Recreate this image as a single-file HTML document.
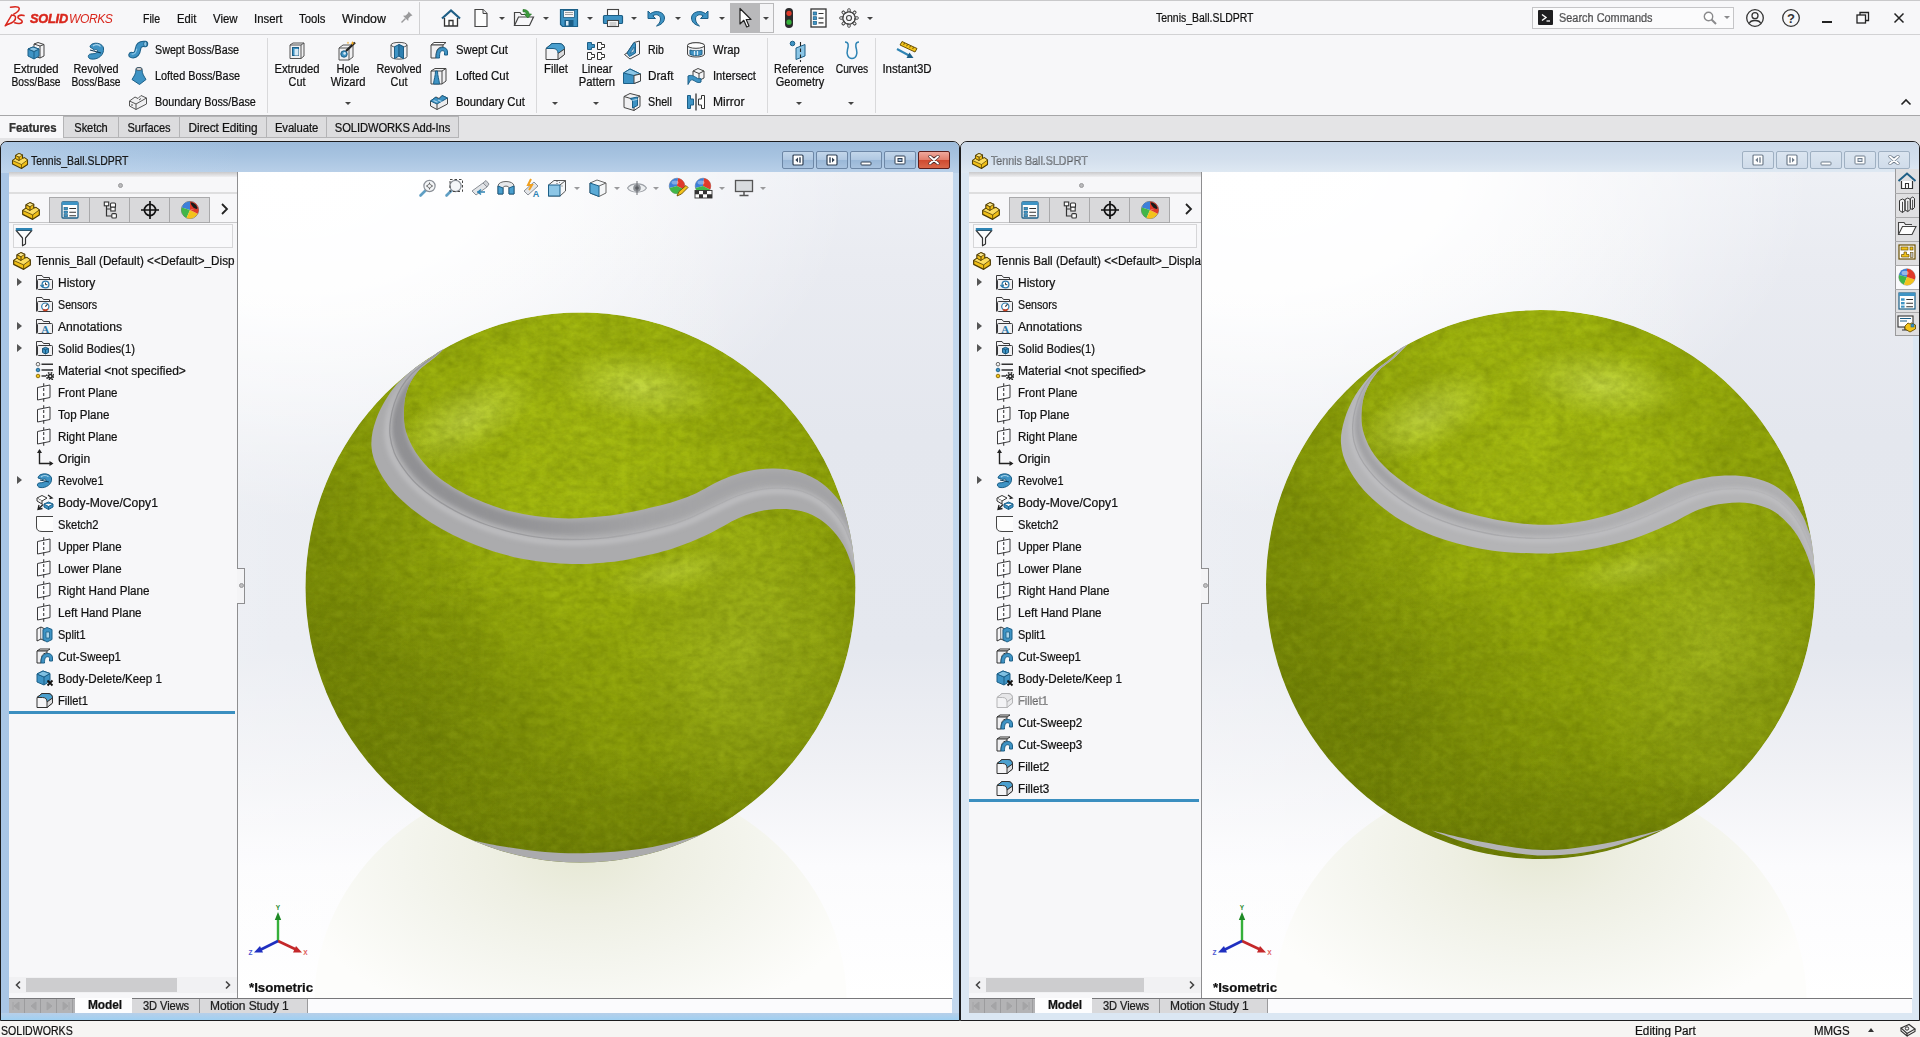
<!DOCTYPE html>
<html><head><meta charset="utf-8"><title>SOLIDWORKS</title><style>
*{box-sizing:border-box;margin:0;padding:0}
html,body{width:1920px;height:1037px;overflow:hidden;background:#e4e4e6;font-family:"Liberation Sans",sans-serif;font-size:12px;color:#111;-webkit-text-stroke:0.22px #111}
.a{position:absolute}
.t{position:absolute;white-space:nowrap;line-height:14px;height:14px;transform:scaleX(.93);transform-origin:0 50%}
.c{text-align:center}
.t.c{transform-origin:50% 50%}
#top{left:0;top:0;width:1920px;height:35px;background:#f7f7f9;border-top:1px solid #c9c9cb;border-bottom:1px solid #d2d2d4}
#ribbon{left:0;top:35px;width:1920px;height:81px;background:#f7f7f9;border-bottom:1px solid #a6a6a8}
#tabs{left:0;top:116px;width:1920px;height:26px;background:#e4e4e6}
.rtab{position:absolute;top:0;height:22px;border:1px solid #b4b4b6;border-left:none;background:#dcdcde;line-height:23px;text-align:center;letter-spacing:-0.1px}
.vsep{position:absolute;width:1px;background:#d9d9db}
#status{left:0;top:1021px;width:1920px;height:16px;background:#f6f5f3}
.win{position:absolute;top:141px;height:880px;border:1px solid #1c1c1e;border-radius:7px 7px 0 0;overflow:hidden}
.tree{position:absolute;background:#f7f7f9;overflow:hidden}
.ti{position:absolute;white-space:nowrap;line-height:14px;height:14px;font-size:12px;transform:scaleX(.935);transform-origin:0 50%}
.arr{position:absolute;width:0;height:0;border-left:5px solid #555;border-top:4px solid transparent;border-bottom:4px solid transparent}
.dd{position:absolute;width:0;height:0;border-top:3px solid #444;border-left:3px solid transparent;border-right:3px solid transparent}
.ptab{position:absolute;top:0;width:40px;height:26px;background:#d9d9db;border:1px solid #a9a9ab;border-left:none}
.wbtn{position:absolute;top:9px;width:32px;height:18px;border-radius:2px}
.btab{position:absolute;top:0;height:15px;line-height:14px;text-align:center;font-size:12px;letter-spacing:-0.1px}
</style></head><body>
<div id="top" class="a">
<svg class="a" style="left:4.0px;top:4.0px" width="22" height="22" viewBox="0 0 22 22"><path d="M6.5 2.2 Q14.5 0.8 15.2 3.4 Q15.6 6 9.8 9.2" fill="none" stroke="#d9261c" stroke-width="1.5" stroke-linecap="round"/>
<path d="M7.6 10.2 L1.2 20.8 L4.2 19.2" fill="none" stroke="#d9261c" stroke-width="1.5" stroke-linejoin="round" stroke-linecap="round"/>
<path d="M7.6 10.2 C12.5 9.6 12.6 14 9.5 16.6 C8 17.8 6 18.6 4.2 19.2" fill="none" stroke="#d9261c" stroke-width="1.5" stroke-linecap="round"/>
<path d="M20 10.6 C17 9.6 13.8 10.4 13.9 12.4 C14 14.4 18.4 14.2 18.2 16.6 C18 18.8 13.6 19 10.8 17.8" fill="none" stroke="#d9261c" stroke-width="1.6" stroke-linecap="round"/></svg><div class="t" style="left:30px;top:11px;font-size:13px;font-weight:bold;font-style:italic;color:#d9261c;-webkit-text-stroke:0.5px #d9261c;letter-spacing:-0.2px;transform:scaleX(0.98);transform-origin:left">SOLID</div><div class="t" style="left:69px;top:11px;font-size:13px;font-style:italic;color:#d9261c;-webkit-text-stroke:0;letter-spacing:-0.5px;transform:scaleX(0.93);transform-origin:left">WORKS</div>
<div class="t" style="left:143.3px;top:11px;transform:scaleX(0.8788);">File</div>
<div class="t" style="left:177.4px;top:11px;transform:scaleX(0.9329);">Edit</div>
<div class="t" style="left:213.2px;top:11px;transform:scaleX(0.9536);">View</div>
<div class="t" style="left:254.2px;top:11px;transform:scaleX(0.9462);">Insert</div>
<div class="t" style="left:299px;top:11px;transform:scaleX(0.9423);">Tools</div>
<div class="t" style="left:342.2px;top:11px;transform:scaleX(1.0284);">Window</div>
<svg class="a" style="left:400.0px;top:9.0px" width="14" height="14" viewBox="0 0 14 14"><path d="M8.5 1.5 L12.5 5.5 L10.8 6 L8.5 8.3 L8.2 11 L3 5.8 L5.7 5.5 L8 3.2 Z" fill="#9a9a9c"/><path d="M5.5 8.5 L1.5 12.5" stroke="#9a9a9c" stroke-width="1.4"/></svg>
<div class="vsep" style="left:419px;top:1px;height:32px;background:#d0d0d2"></div>
<div class="a" style="left:730px;top:2px;width:44px;height:30px;border:1px solid #b9b9bb;background:#f4f4f6"></div><div class="a" style="left:731px;top:3px;width:29px;height:28px;background:#b9b9bb"></div>
<svg class="a" style="left:440.0px;top:7.0px" width="22" height="20" viewBox="0 0 22 20"><path d="M2 10.5 L11 2.5 L20 10.5" fill="none" stroke="#1f5f86" stroke-width="2.2" stroke-linejoin="miter"/><path d="M4.5 10 V18 H17.5 V10" fill="#fff" stroke="#333" stroke-width="1.3"/><path d="M9 18 V12.5 H13 V18" fill="none" stroke="#333" stroke-width="1.3"/></svg><svg class="a" style="left:473.0px;top:7.0px" width="16" height="20" viewBox="0 0 16 20"><path d="M2 1.5 H10 L14 5.5 V18.5 H2 Z" fill="#fdfdfd" stroke="#444" stroke-width="1.2"/><path d="M10 1.5 V5.5 H14" fill="#e6e6e8" stroke="#444" stroke-width="1"/></svg><svg class="a" style="left:513.0px;top:7.0px" width="22" height="20" viewBox="0 0 22 20"><path d="M1.5 17.5 V4.5 H7 L8.5 6.5 H13" fill="#f4f4f6" stroke="#444" stroke-width="1.2"/><path d="M1.5 17.5 L5.5 9 H20.5 L16.5 17.5 Z" fill="#f7f7f9" stroke="#444" stroke-width="1.2"/><path d="M10 1.5 C14 1.5 16 3.5 16 6 L18.5 6 L14.8 10 L11 6 H13.3 C13.3 4.5 12 3.8 10 3.8 Z" fill="#3c9a3c" stroke="#1d6b1d" stroke-width=".6"/></svg><svg class="a" style="left:559.0px;top:7.0px" width="20" height="20" viewBox="0 0 20 20"><path d="M1.5 1.5 H18.5 V18.5 H3.5 L1.5 16.5 Z" fill="#3e93c4" stroke="#1c5f87" stroke-width="1.2"/><rect x="4.5" y="2.5" width="11" height="7" fill="#f4f4f6" stroke="#1c5f87" stroke-width=".8"/><path d="M6 4.5 H14 M6 6.5 H14" stroke="#888" stroke-width=".8"/><rect x="5.5" y="12" width="9" height="6.5" fill="#1c5f87"/><rect x="7" y="13" width="2.5" height="4.5" fill="#d7eaf6"/></svg><svg class="a" style="left:602.0px;top:7.0px" width="22" height="20" viewBox="0 0 22 20"><rect x="5.5" y="1.5" width="11" height="7" fill="#fdfdfd" stroke="#444" stroke-width="1.1"/><rect x="1.5" y="7.5" width="19" height="8" rx="1" fill="#3e93c4" stroke="#1c5f87" stroke-width="1.2"/><rect x="5.5" y="12.5" width="11" height="6" fill="#fdfdfd" stroke="#444" stroke-width="1.1"/><path d="M7.5 15 H14.5 M7.5 17 H14.5" stroke="#888" stroke-width=".8"/></svg><svg class="a" style="left:646.0px;top:7.5px" width="20" height="18" viewBox="0 0 20 18"><path d="M2 2 L2 9.5 L9.5 9.5 L6.8 6.8 C10 4.5 14.5 6 14.5 10 C14.5 13 12.5 15.5 10.5 17 C15 16 18.5 13 18.5 9 C18.5 3 10 0.5 4.6 4.6 Z" fill="#3e93c4" stroke="#1c5f87" stroke-width="1" stroke-linejoin="round"/></svg><svg class="a" style="left:690.0px;top:7.5px" width="20" height="18" viewBox="0 0 20 18"><path d="M18 2 L18 9.5 L10.5 9.5 L13.2 6.8 C10 4.5 5.5 6 5.5 10 C5.5 13 7.5 15.5 9.5 17 C5 16 1.5 13 1.5 9 C1.5 3 10 0.5 15.4 4.6 Z" fill="#3e93c4" stroke="#1c5f87" stroke-width="1" stroke-linejoin="round"/></svg><svg class="a" style="left:738.0px;top:6.0px" width="14" height="22" viewBox="0 0 14 22"><path d="M2 1.5 V17 L5.8 13.3 L8.7 20 L11 19 L8.2 12.5 H13 Z" fill="#fff" stroke="#222" stroke-width="1.2" stroke-linejoin="round"/></svg><svg class="a" style="left:784.0px;top:6.0px" width="10" height="22" viewBox="0 0 10 22"><rect x="1" y="1" width="8" height="20" rx="4" fill="#2a2a2c"/><circle cx="5" cy="6.3" r="2.6" fill="#e03a2a"/><circle cx="5" cy="15.2" r="2.6" fill="#35b03a"/></svg><svg class="a" style="left:810.0px;top:7.0px" width="17" height="20" viewBox="0 0 17 20"><rect x="1" y="1" width="15" height="18" fill="#fdfdfd" stroke="#333" stroke-width="1.3"/><rect x="3.2" y="4" width="3.4" height="3" fill="#3e93c4" stroke="#1c5f87" stroke-width=".7"/><rect x="3.2" y="8.7" width="3.4" height="3" fill="#3e93c4" stroke="#1c5f87" stroke-width=".7"/><rect x="3.2" y="13.4" width="3.4" height="3" fill="#3e93c4" stroke="#1c5f87" stroke-width=".7"/><path d="M8.5 5.5 H13.5 M8.5 10.2 H13.5 M8.5 14.9 H13.5" stroke="#333" stroke-width="1.2"/></svg><svg class="a" style="left:839.0px;top:7.0px" width="20" height="20" viewBox="0 0 20 20"><circle cx="10" cy="10" r="6.2" fill="#f7f7f9" stroke="#444" stroke-width="1.2"/><rect x="8.8" y="0.8" width="2.4" height="3.4" rx=".6" fill="none" stroke="#444" stroke-width="1" transform="rotate(0 10 10)"/><rect x="8.8" y="0.8" width="2.4" height="3.4" rx=".6" fill="none" stroke="#444" stroke-width="1" transform="rotate(45 10 10)"/><rect x="8.8" y="0.8" width="2.4" height="3.4" rx=".6" fill="none" stroke="#444" stroke-width="1" transform="rotate(90 10 10)"/><rect x="8.8" y="0.8" width="2.4" height="3.4" rx=".6" fill="none" stroke="#444" stroke-width="1" transform="rotate(135 10 10)"/><rect x="8.8" y="0.8" width="2.4" height="3.4" rx=".6" fill="none" stroke="#444" stroke-width="1" transform="rotate(180 10 10)"/><rect x="8.8" y="0.8" width="2.4" height="3.4" rx=".6" fill="none" stroke="#444" stroke-width="1" transform="rotate(225 10 10)"/><rect x="8.8" y="0.8" width="2.4" height="3.4" rx=".6" fill="none" stroke="#444" stroke-width="1" transform="rotate(270 10 10)"/><rect x="8.8" y="0.8" width="2.4" height="3.4" rx=".6" fill="none" stroke="#444" stroke-width="1" transform="rotate(315 10 10)"/><circle cx="10" cy="10" r="5.4" fill="#f7f7f9"/><circle cx="10" cy="10" r="6" fill="none" stroke="#444" stroke-width="1.1" stroke-dasharray="2.4 2.31" /><circle cx="10" cy="10" r="2.5" fill="none" stroke="#444" stroke-width="1.2"/></svg>
<div class="dd" style="left:499px;top:16px;border-top-color:#444"></div>
<div class="dd" style="left:543px;top:16px;border-top-color:#444"></div>
<div class="dd" style="left:587px;top:16px;border-top-color:#444"></div>
<div class="dd" style="left:631px;top:16px;border-top-color:#444"></div>
<div class="dd" style="left:675px;top:16px;border-top-color:#444"></div>
<div class="dd" style="left:719px;top:16px;border-top-color:#444"></div>
<div class="dd" style="left:763px;top:16px;border-top-color:#444"></div>
<div class="dd" style="left:867px;top:16px;border-top-color:#444"></div>
<div class="t" style="left:1155.5px;top:10px;transform:scaleX(0.8718);">Tennis_Ball.SLDPRT</div>
<div class="a" style="left:1532px;top:6px;width:202px;height:22px;border:1px solid #c5c5c7;background:#fbfbfc"></div>
<div class="a" style="left:1538px;top:9px;width:15px;height:15px;background:#1e1e20;border-radius:1px"></div>
<svg class="a" style="left:1538.0px;top:9.0px" width="15" height="15" viewBox="0 0 15 15"><path d="M4 4.5 L8 7.5 L4 10.5" stroke="#fff" stroke-width="1.4" fill="none"/><path d="M8.5 11 H12" stroke="#fff" stroke-width="1.3"/></svg>
<div class="t" style="left:1559px;top:10px;transform:scaleX(0.9103);color:#6b6b6d">Search Commands</div>
<svg class="a" style="left:1702.0px;top:8.5px" width="16" height="16" viewBox="0 0 16 16"><circle cx="6.5" cy="6.5" r="4.2" fill="#fff" stroke="#8a8a8c" stroke-width="1.4"/><path d="M9.5 9.5 L14 14" stroke="#8a8a8c" stroke-width="2"/></svg>
<div class="dd" style="left:1724px;top:15px;border-top-color:#8a8a8c"></div>
<svg class="a" style="left:1745.0px;top:7.0px" width="20" height="20" viewBox="0 0 20 20"><circle cx="10" cy="10" r="8.3" fill="none" stroke="#333" stroke-width="1.3"/><circle cx="10" cy="7.7" r="3" fill="none" stroke="#333" stroke-width="1.3"/><path d="M4.3 15.5 C5.5 11.5 14.5 11.5 15.7 15.5" fill="none" stroke="#333" stroke-width="1.3"/></svg>
<svg class="a" style="left:1781.0px;top:7.0px" width="20" height="20" viewBox="0 0 20 20"><circle cx="10" cy="10" r="8.3" fill="none" stroke="#333" stroke-width="1.3"/><text x="10" y="14.6" text-anchor="middle" font-family="Liberation Sans" font-weight="bold" font-size="13" fill="#333">?</text></svg>
<div class="a" style="left:1822px;top:20px;width:10px;height:2px;background:#222"></div>
<svg class="a" style="left:1856.0px;top:10.0px" width="14" height="14" viewBox="0 0 14 14"><rect x="1" y="4" width="8.5" height="8" fill="none" stroke="#222" stroke-width="1.3"/><path d="M4 4 V1.5 H12.5 V9.5 H9.5" fill="none" stroke="#222" stroke-width="1.3"/></svg>
<svg class="a" style="left:1893.0px;top:11.0px" width="12" height="12" viewBox="0 0 12 12"><path d="M1.5 1.5 L10.5 10.5 M10.5 1.5 L1.5 10.5" stroke="#222" stroke-width="1.5"/></svg>
</div>
<div id="ribbon" class="a">
<div class="vsep" style="left:267px;top:3px;height:75px"></div>
<div class="vsep" style="left:536px;top:3px;height:75px"></div>
<div class="vsep" style="left:767px;top:3px;height:75px"></div>
<div class="vsep" style="left:875px;top:3px;height:75px"></div>
<svg class="a" style="left:26.0px;top:6.0px" width="20" height="20" viewBox="0 0 20 20"><path d="M8 3 L12 1.5 L18 3.5 V15 L14 17 L8 15 Z" fill="#f4f4f6" stroke="#444" stroke-width="1"/><path d="M14 5 V17 M8 3 L14 5 L18 3.5" fill="none" stroke="#444" stroke-width="1"/><path d="M2 8 L7 6 L13 8 V15 L8 18 L2 15 Z" fill="#3e93c4" stroke="#1c5f87" stroke-width="1" stroke-linejoin="round"/><path d="M2 8 L8 10.5 L13 8 M8 10.5 V18" fill="none" stroke="#1c5f87" stroke-width="1"/><path d="M2 8 L7 6 L13 8 L8 10.5 Z" fill="#8cc6e6" stroke="#1c5f87" stroke-width="1" stroke-linejoin="round"/></svg><svg class="a" style="left:86.0px;top:6.0px" width="20" height="20" viewBox="0 0 20 20"><path d="M4 6 C4 1 16 0.5 17.5 7 C18.5 14 12 19 5 18 C1.5 17.5 1.5 13.5 4.5 13 C8 12.5 10.5 13 11.5 10.5 C12 8.5 9.5 8 8.5 9 Z" fill="#3e93c4" stroke="#1c5f87" stroke-width="1"/><path d="M7 5 C9 3 13 3.3 14.5 5.5" stroke="#a9d3ea" stroke-width="1.3" fill="none"/><path d="M4 9 L15 12" stroke="#0e3a57" stroke-width="1.1"/></svg><svg class="a" style="left:127.5px;top:5.0px" width="21" height="20" viewBox="0 0 21 20"><path d="M3.5 15 C8 16 9.5 12.5 10 9 C10.5 5.5 12 3.5 17 4" fill="none" stroke="#1c5f87" stroke-width="6.4" stroke-linecap="round"/><path d="M3.5 15 C8 16 9.5 12.5 10 9 C10.5 5.5 12 3.5 17 4" fill="none" stroke="#3e93c4" stroke-width="4.4" stroke-linecap="round"/><path d="M4 14 C7 14.5 8.2 12 8.7 9" fill="none" stroke="#8cc6e6" stroke-width="1.2" stroke-linecap="round"/><ellipse cx="17.3" cy="4" rx="1.7" ry="2.5" fill="#8cc6e6" stroke="#1c5f87" stroke-width=".8"/></svg><svg class="a" style="left:131.0px;top:31.0px" width="16" height="20" viewBox="0 0 16 20"><path d="M5 3 C5 1 11 1 11 3 C11 8 13 10 15 13.5 L8.5 18.5 L1 13.5 C3 10 5 8 5 3 Z" fill="#3e93c4" stroke="#1c5f87" stroke-width="1" stroke-linejoin="round"/><ellipse cx="8" cy="3" rx="3" ry="1.3" fill="#f4f4f6" stroke="#444" stroke-width=".8"/></svg><svg class="a" style="left:128.0px;top:58.0px" width="20" height="18" viewBox="0 0 20 18"><path d="M1.5 8 L7 4 L10 5.5 L13 2.5 L18.5 5 V11 L8 16.5 L1.5 13 Z" fill="#f0f0f2" stroke="#555" stroke-width="1" stroke-linejoin="round"/><path d="M1.5 8 L8 11 L18.5 5 M8 11 V16.5" fill="none" stroke="#555" stroke-width="1"/><path d="M4 11 L4 13 M11 7 L13 5.5" stroke="#555" stroke-width="1"/></svg><svg class="a" style="left:287.0px;top:6.0px" width="20" height="20" viewBox="0 0 20 20"><path d="M3 4 L6 2 H17 V15 L14 17.5 H3 Z" fill="#f0f0f2" stroke="#555" stroke-width="1" stroke-linejoin="round"/><path d="M3 4 H14 V17.5 M14 4 L17 2" fill="none" stroke="#555" stroke-width="1"/><rect x="5.5" y="6.5" width="6" height="8" fill="#3e93c4" stroke="#1c5f87" stroke-width="1"/><rect x="7.5" y="8" width="4" height="6.5" fill="#d7eaf6"/></svg><svg class="a" style="left:337.0px;top:5.0px" width="22" height="22" viewBox="0 0 22 22"><path d="M2 8 L6 5 H16 V17 L12 20 H2 Z" fill="#f0f0f2" stroke="#555" stroke-width="1" stroke-linejoin="round"/><path d="M2 8 H12 V20 M12 8 L16 5" fill="none" stroke="#555" stroke-width="1"/><circle cx="7" cy="14" r="3.2" fill="#3e93c4" stroke="#1c5f87" stroke-width="1"/><circle cx="7.6" cy="13.4" r="1.3" fill="#d7eaf6"/><path d="M9 11 L18 2.5" stroke="#222" stroke-width="2.4"/><path d="M15.5 1 l.6 1.6 1.6 .6 -1.6 .6 -.6 1.6 -.6 -1.6 -1.6 -.6 1.6 -.6 Z M11 1.5 l.4 1 1 .4 -1 .4 -.4 1 -.4 -1 -1 -.4 1 -.4 Z" fill="#e9a21a"/></svg><svg class="a" style="left:389.0px;top:5.0px" width="20" height="22" viewBox="0 0 20 22"><path d="M2 5 C2 1.5 18 1.5 18 5 V16.5 C18 20 2 20 2 16.5 Z" fill="#f0f0f2" stroke="#555" stroke-width="1"/><path d="M2 5 C2 8 18 8 18 5" fill="none" stroke="#555" stroke-width="1"/><path d="M5.5 6.8 L10 4.5 L14.5 6.8 V18.6 L10 16 L5.5 18.6 Z" fill="#3e93c4" stroke="#1c5f87" stroke-width="1" stroke-linejoin="round"/><path d="M10 4.5 V16" stroke="#1c5f87" stroke-width="1"/><path d="M10 4.5 L14.5 6.8 V18.6 L10 16 Z" fill="#2f7fb0" stroke="#1c5f87" stroke-width="1" stroke-linejoin="round"/></svg><svg class="a" style="left:429.0px;top:5.0px" width="20" height="20" viewBox="0 0 20 20"><path d="M2 5 L5 2.5 H17 L14 5 Z" fill="#fff" stroke="#444" stroke-width="1"/><path d="M2 5 H14 V7 C8 7 7 11 7 18 H2 Z" fill="#f0f0f2" stroke="#444" stroke-width="1"/><path d="M7 18 C7 11 9 7.5 14 7.5 C17 7.5 18.5 9.5 18.5 12 V15 H15.5 V12.5 C15.5 11.3 14.8 10.7 13.8 10.7 C11 10.7 10.5 13 10.5 18 Z" fill="#3e93c4" stroke="#1c5f87" stroke-width="1"/></svg><svg class="a" style="left:429.0px;top:31.0px" width="20" height="20" viewBox="0 0 20 20"><path d="M2 5 L6 2.5 H17 V15 L13 18 H2 Z" fill="#f0f0f2" stroke="#444" stroke-width="1" stroke-linejoin="round"/><path d="M2 5 H13 V18 M13 5 L17 2.5" fill="none" stroke="#444" stroke-width="1"/><path d="M6.5 5 C6.5 10 5 13 4.5 18 H10.5 C10 13 8.5 10 8.5 5 Z" fill="#3e93c4" stroke="#1c5f87" stroke-width="1"/></svg><svg class="a" style="left:429.0px;top:58.0px" width="20" height="18" viewBox="0 0 20 18"><path d="M1.5 8 L7 4 L10 5.5 L13 2.5 L18.5 5 V11 L8 16.5 L1.5 13 Z" fill="#ececee" stroke="#444" stroke-width="1" stroke-linejoin="round"/><path d="M1.5 8 L7 4 C9 7 11 6 13 2.5 L18.5 5 L8 11 Z" fill="#3e93c4" stroke="#1c5f87" stroke-width="1" stroke-linejoin="round"/><path d="M4.5 7.5 L8.5 9.2 M9 7 L12.5 8.4" stroke="#a9d3ea" stroke-width="1.1"/><path d="M8 11 V16.5" stroke="#444" stroke-width="1"/></svg><svg class="a" style="left:544.0px;top:6.0px" width="22" height="20" viewBox="0 0 22 20"><path d="M2 7.5 L8 2.5 H15 C18.5 2.5 20.5 5 20.5 8 V13.5 L14 18.5 H2 Z" fill="#f4f4f6" stroke="#444" stroke-width="1" stroke-linejoin="round"/><path d="M8 2.5 H15 C18.5 2.5 20.5 5 20.5 8 L14 12.5 C14 9 12 7.5 9 7.5 H2 Z" fill="#4a9fce" stroke="#1c5f87" stroke-width="1" stroke-linejoin="round"/><path d="M14 12.5 V18.5 L20.5 13.5 V8 Z" fill="#dcdcde" stroke="#444" stroke-width="1" stroke-linejoin="round"/></svg><svg class="a" style="left:586.0px;top:6.0px" width="20" height="20" viewBox="0 0 20 20"><path d="M1.5 1.5 H5.5 V3.5 H8.5 V6.5 H5.5 V8.5 H1.5 Z" fill="#3e93c4" stroke="#1c5f87" stroke-width="1"/><path d="M11.5 1.5 H15.5 V3.5 H18.5 V6.5 H15.5 V8.5 H11.5 Z" fill="#fdfdfd" stroke="#333" stroke-width="1"/><path d="M1.5 11.5 H5.5 V13.5 H8.5 V16.5 H5.5 V18.5 H1.5 Z" fill="#fdfdfd" stroke="#333" stroke-width="1"/><path d="M11.5 11.5 H15.5 V13.5 H18.5 V16.5 H15.5 V18.5 H11.5 Z" fill="#fdfdfd" stroke="#333" stroke-width="1"/></svg><svg class="a" style="left:622.5px;top:5.0px" width="19" height="20" viewBox="0 0 19 20"><path d="M1.5 14.5 L4 13 L11 2.5 L16.5 1 V14 L7 19 Z" fill="#f4f4f6" stroke="#444" stroke-width="1" stroke-linejoin="round"/><path d="M4 13 L11 2.5 L12.5 3.5 V13 L6.5 16.5 Z" fill="#3e93c4" stroke="#1c5f87" stroke-width="1" stroke-linejoin="round"/><path d="M7 13.5 L11 7 V11.5 Z" fill="#d7eaf6" stroke="#1c5f87" stroke-width=".7"/></svg><svg class="a" style="left:622.0px;top:32.0px" width="20" height="18" viewBox="0 0 20 18"><path d="M1.5 6 L8 2 L18.5 7 V14 L12 16.5 H1.5 Z" fill="#3e93c4" stroke="#1c5f87" stroke-width="1" stroke-linejoin="round"/><path d="M1.5 6 L8 2 L18.5 7 L12 8.5 Z" fill="#8cc6e6" stroke="#1c5f87" stroke-width="1" stroke-linejoin="round"/><path d="M12 8.5 L18.5 7 V14 L12 16.5 Z" fill="#f4f4f6" stroke="#444" stroke-width="1" stroke-linejoin="round"/></svg><svg class="a" style="left:622.0px;top:57.0px" width="20" height="20" viewBox="0 0 20 20"><path d="M2 4.5 L8 1.5 L18 4 V14.5 L12 18.5 L2 15.5 Z" fill="#f0f0f2" stroke="#444" stroke-width="1" stroke-linejoin="round"/><path d="M2 4.5 L12 7.5 V18.5 M12 7.5 L18 4" fill="none" stroke="#444" stroke-width="1"/><path d="M8 6.5 L15.5 5 V13.5 L10.5 16 V8.5 Z" fill="#3e93c4" stroke="#1c5f87" stroke-width="1" stroke-linejoin="round"/><path d="M10.5 8.5 L15.5 7.2" stroke="#a9d3ea" stroke-width="1"/></svg><svg class="a" style="left:686.0px;top:6.0px" width="20" height="18" viewBox="0 0 20 18"><path d="M1.5 4.5 C1.5 1 18.5 1 18.5 4.5 V13 C18.5 17 1.5 17 1.5 13 Z" fill="#f0f0f2" stroke="#444" stroke-width="1"/><ellipse cx="10" cy="4.5" rx="8.5" ry="2.8" fill="#fdfdfd" stroke="#444" stroke-width="1"/><path d="M4 9 C7 10.2 13 10.2 16 9 V13.5 C13 14.8 7 14.8 4 13.5 Z" fill="#3e93c4" stroke="#1c5f87" stroke-width="1"/><path d="M8.5 10 V14.3 M11.5 10 V14.3" stroke="#d7eaf6" stroke-width="1.3"/></svg><svg class="a" style="left:686.0px;top:31.0px" width="20" height="20" viewBox="0 0 20 20"><path d="M7 5 L12 2.5 L18 5 V12 L13 14.5 L7 12 Z" fill="#f4f4f6" stroke="#444" stroke-width="1" stroke-linejoin="round"/><path d="M7 5 L13 7.5 L18 5 M13 7.5 V14.5" fill="none" stroke="#444" stroke-width="1"/><path d="M2 10 C5 8.5 8 10 10 11.5 C12 13 14 13 15 12.5 V16 C12 17.5 9.5 15.5 8 14.5 C6 13.3 4.5 14 4 15 L2 18.5 Z" fill="#3e93c4" stroke="#1c5f87" stroke-width="1"/></svg><svg class="a" style="left:686.0px;top:58.0px" width="20" height="18" viewBox="0 0 20 18"><path d="M1.5 2.5 H4.5 V6 H7.5 V12 H4.5 V15.5 H1.5 Z" fill="#3e93c4" stroke="#1c5f87" stroke-width="1"/><path d="M18.5 2.5 H15.5 V6 H12.5 V12 H15.5 V15.5 H18.5 Z" fill="#fdfdfd" stroke="#333" stroke-width="1"/><path d="M10 0.5 V17.5" stroke="#222" stroke-width="1.2"/></svg><svg class="a" style="left:789.0px;top:5.0px" width="20" height="22" viewBox="0 0 20 22"><circle cx="3.5" cy="3.5" r="2.3" fill="#3e93c4" stroke="#1c5f87" stroke-width="1"/><path d="M7 8 L16 4.5 V16 L7 19.5 Z" fill="#8cc6e6" stroke="#1c5f87" stroke-width="1" stroke-linejoin="round"/><path d="M11.5 2 V6 M11.5 8.5 V12 M11.5 14.5 V18 M11.5 20 V22" stroke="#222" stroke-width="1.1"/></svg><svg class="a" style="left:842.0px;top:5.0px" width="20" height="22" viewBox="0 0 20 22"><path d="M3 2 C7 2 6.5 6 5.5 9.5 C4.5 13.5 5.5 18.5 10 18.5 C14.5 18.5 15.5 13.5 14.5 9.5 C13.5 6 13 2 17 2" fill="none" stroke="#2e84b4" stroke-width="1.5"/></svg><svg class="a" style="left:895.0px;top:5.0px" width="24" height="22" viewBox="0 0 24 22"><path d="M7 1.5 L22 8.5 L20 12 L5 5 Z" fill="#f2c31b" stroke="#6b5206" stroke-width="1" stroke-linejoin="round"/><path d="M9.5 3 L8.7 4.8 M12.5 4.4 L11.7 6.2 M15.5 5.8 L14.7 7.6 M18.5 7.2 L17.7 9" stroke="#6b5206" stroke-width="1"/><path d="M2 9 L14 15.5" stroke="#2e84b4" stroke-width="2"/><path d="M18.5 18 L11.5 18 L14.5 12.5 Z" fill="#1c5f87"/></svg>
<div class="t c" style="left:-24px;width:120px;top:27px;transform:scaleX(0.9411);">Extruded</div>
<div class="t c" style="left:-24.200000000000003px;width:120px;top:40px;transform:scaleX(0.8540);">Boss/Base</div>
<div class="t c" style="left:36.099999999999994px;width:120px;top:27px;transform:scaleX(0.9014);">Revolved</div>
<div class="t c" style="left:36.099999999999994px;width:120px;top:40px;transform:scaleX(0.8540);">Boss/Base</div>
<div class="t c" style="left:237px;width:120px;top:27px;transform:scaleX(0.9411);">Extruded</div>
<div class="t c" style="left:237px;width:120px;top:40px;transform:scaleX(0.8990);">Cut</div>
<div class="t c" style="left:288px;width:120px;top:27px;transform:scaleX(0.9357);">Hole</div>
<div class="t c" style="left:288.2px;width:120px;top:40px;transform:scaleX(0.9292);">Wizard</div>
<div class="t c" style="left:339.2px;width:120px;top:27px;transform:scaleX(0.9014);">Revolved</div>
<div class="t c" style="left:339.2px;width:120px;top:40px;transform:scaleX(0.8990);">Cut</div>
<div class="t c" style="left:495.70000000000005px;width:120px;top:27px;transform:scaleX(0.9430);">Fillet</div>
<div class="t c" style="left:536.5px;width:120px;top:27px;transform:scaleX(0.9203);">Linear</div>
<div class="t c" style="left:536.5px;width:120px;top:40px;transform:scaleX(0.9379);">Pattern</div>
<div class="t c" style="left:739.2px;width:120px;top:27px;transform:scaleX(0.8993);">Reference</div>
<div class="t c" style="left:739.9px;width:120px;top:40px;transform:scaleX(0.9186);">Geometry</div>
<div class="t c" style="left:791.8px;width:120px;top:27px;transform:scaleX(0.8523);">Curves</div>
<div class="t c" style="left:846.6px;width:120px;top:27px;transform:scaleX(0.9577);">Instant3D</div>
<div class="t" style="left:154.5px;top:8px;transform:scaleX(0.8930);">Swept Boss/Base</div>
<div class="t" style="left:154.5px;top:34px;transform:scaleX(0.9047);">Lofted Boss/Base</div>
<div class="t" style="left:154.5px;top:60px;transform:scaleX(0.8994);">Boundary Boss/Base</div>
<div class="t" style="left:455.7px;top:8px;transform:scaleX(0.9393);">Swept Cut</div>
<div class="t" style="left:455.7px;top:34px;transform:scaleX(0.9553);">Lofted Cut</div>
<div class="t" style="left:455.7px;top:60px;transform:scaleX(0.9388);">Boundary Cut</div>
<div class="t" style="left:648.3px;top:8px;transform:scaleX(0.8770);">Rib</div>
<div class="t" style="left:648.3px;top:34px;transform:scaleX(0.9763);">Draft</div>
<div class="t" style="left:648.3px;top:60px;transform:scaleX(0.8956);">Shell</div>
<div class="t" style="left:712.5px;top:8px;transform:scaleX(0.9384);">Wrap</div>
<div class="t" style="left:712.5px;top:34px;transform:scaleX(0.9341);">Intersect</div>
<div class="t" style="left:712.5px;top:60px;transform:scaleX(1.0055);">Mirror</div>
<div class="dd" style="left:345px;top:67px;border-top-color:#444"></div>
<div class="dd" style="left:552px;top:67px;border-top-color:#444"></div>
<div class="dd" style="left:593px;top:67px;border-top-color:#444"></div>
<div class="dd" style="left:796px;top:67px;border-top-color:#444"></div>
<div class="dd" style="left:848px;top:67px;border-top-color:#444"></div>
<svg class="a" style="left:1900.0px;top:63.0px" width="12" height="8" viewBox="0 0 12 8"><path d="M1.5 6.5 L6 2 L10.5 6.5" stroke="#222" stroke-width="1.6" fill="none"/></svg>
</div>
<div id="tabs" class="a">
<div class="a" style="left:0;top:0;width:63px;height:22px;background:#f7f7f9"></div>
<div class="t" style="left:8.5px;top:5px;transform:scaleX(0.9494);font-weight:bold;color:#333">Features</div>
<div class="rtab" style="left:63px;width:56px;border-left:1px solid #b4b4b6;"><div style="transform:scaleX(0.9240);">Sketch</div></div>
<div class="rtab" style="left:119px;width:61px;"><div style="transform:scaleX(0.9206);">Surfaces</div></div>
<div class="rtab" style="left:180px;width:87px;"><div style="transform:scaleX(0.9877);">Direct Editing</div></div>
<div class="rtab" style="left:267px;width:60px;"><div style="transform:scaleX(0.9421);">Evaluate</div></div>
<div class="rtab" style="left:327px;width:132px;"><div style="transform:scaleX(0.9332);">SOLIDWORKS Add-Ins</div></div>
</div>
<div class="win" style="left:0px;width:960px;background:linear-gradient(90deg,#a9c6e6 0%,#c3d8ee 100%)"><div class="a" style="left:0;top:0;width:960px;height:31px;background:linear-gradient(180deg,#9dbbdb 0%,#a7c3e0 45%,#b9d0e9 100%)"></div><div class="a" style="left:0;top:0;width:960px;height:31px;background:linear-gradient(90deg,rgba(200,222,245,.35) 0%,rgba(200,222,245,0) 25%)"></div><svg class="a" style="left:9.5px;top:9.5px" width="18" height="18" viewBox="0 0 18 18"><path d="M1.5 8.5 L4.5 6.5 L4.5 3.5 L8 1.5 L11.5 3 L11.5 6.5 L13.5 5.8 L16.5 8 L16.5 12.5 L10.5 16.5 L1.5 12 Z" fill="#f1bf17" stroke="#4f3d05" stroke-width="1.1" stroke-linejoin="round"/>
<path d="M4.5 3.5 L8 1.5 L11.5 3 L8 5.2 Z" fill="#fde98f" stroke="#4f3d05" stroke-width=".7" stroke-linejoin="round"/>
<path d="M1.5 8.5 L4.5 6.5 L8 8.5 L11.5 6.5 L13.5 5.8 L16.5 8 L10.5 12.5 Z" fill="#fbdc5e" stroke="#4f3d05" stroke-width=".7" stroke-linejoin="round"/>
<path d="M8 5.2 L8 8.5 M10.5 12.5 L10.5 16.5" stroke="#4f3d05" stroke-width=".7" fill="none"/>
<path d="M4.5 3.5 L8 5.2 L8 8.5 L4.5 6.5 Z" fill="#f1bf17" stroke="#4f3d05" stroke-width=".7" stroke-linejoin="round"/></svg><div class="t" style="left:29.6px;top:12px;transform:scaleX(0.8718);color:#1a1a1a;">Tennis_Ball.SLDPRT</div><div class="wbtn" style="left:780.5px;border:1px solid #6d87a6;background:linear-gradient(180deg,#c3d6ea 0%,#b0c8e2 48%,#9ab8d8 52%,#a9c3df 100%)"></div><svg class="a" style="left:790.5px;top:12.0px" width="12" height="12" viewBox="0 0 12 12"><rect x="1" y="1" width="10" height="10" rx="1" fill="#fff" stroke="#2e3e52" stroke-width="1.2"/><path d="M6 3.5 L3.3 6 L6 8.5 Z" fill="#2e3e52"/><path d="M8 3.2 V8.8" stroke="#2e3e52" stroke-width="1.4"/></svg><div class="wbtn" style="left:814.5px;border:1px solid #6d87a6;background:linear-gradient(180deg,#c3d6ea 0%,#b0c8e2 48%,#9ab8d8 52%,#a9c3df 100%)"></div><svg class="a" style="left:824.5px;top:12.0px" width="12" height="12" viewBox="0 0 12 12"><rect x="1" y="1" width="10" height="10" rx="1" fill="#fff" stroke="#2e3e52" stroke-width="1.2"/><path d="M6 3.5 L8.7 6 L6 8.5 Z" fill="#2e3e52"/><path d="M4 3.2 V8.8" stroke="#2e3e52" stroke-width="1.4"/></svg><div class="wbtn" style="left:848.5px;border:1px solid #6d87a6;background:linear-gradient(180deg,#c3d6ea 0%,#b0c8e2 48%,#9ab8d8 52%,#a9c3df 100%)"></div><svg class="a" style="left:858.5px;top:18.5px" width="12" height="5" viewBox="0 0 12 5"><rect x="1" y="1" width="10" height="3" rx=".8" fill="#fff" stroke="#2e3e52" stroke-width="1"/></svg><div class="wbtn" style="left:882.5px;border:1px solid #6d87a6;background:linear-gradient(180deg,#c3d6ea 0%,#b0c8e2 48%,#9ab8d8 52%,#a9c3df 100%)"></div><svg class="a" style="left:892.5px;top:13.0px" width="12" height="10" viewBox="0 0 12 10"><rect x="1" y="1" width="10" height="8" rx=".8" fill="#fff" stroke="#2e3e52" stroke-width="1"/><rect x="4" y="3.5" width="4" height="3" fill="#9ab8d8" stroke="#2e3e52" stroke-width="1"/></svg><div class="wbtn" style="left:916.5px;border:1px solid #5b1e1c;background:linear-gradient(180deg,#eea89c 0%,#e27f6d 48%,#cf4a30 52%,#d9674a 100%)"></div><svg class="a" style="left:926.5px;top:13.0px" width="12" height="10" viewBox="0 0 12 10"><path d="M2 1.5 L6 4 L10 1.5 M2 8.5 L6 6 L10 8.5 M2 1.5 L10 8.5 M10 1.5 L2 8.5" stroke="#4a2a28" stroke-width="3.2" stroke-linecap="round" fill="none"/><path d="M2 1.5 L10 8.5 M10 1.5 L2 8.5" stroke="#fff" stroke-width="1.9" stroke-linecap="round" fill="none"/></svg><div class="a" style="left:237px;top:30px;width:715px;height:826px;overflow:hidden;background:#fff"><svg class="a" style="left:0;top:0" width="715" height="826" viewBox="0 0 715 826">
<defs>
<linearGradient id="bgl" x1="0" y1="0" x2="0" y2="1">
 <stop offset="0" stop-color="#eef0f5"/><stop offset="0.12" stop-color="#e9ebf1"/><stop offset="0.32" stop-color="#e4e7ee"/><stop offset="0.58" stop-color="#e5e8ef"/><stop offset="0.72" stop-color="#f0f1f5"/><stop offset="0.84" stop-color="#fbfbfd"/><stop offset="1" stop-color="#ffffff"/>
</linearGradient>
<radialGradient id="whl" gradientUnits="userSpaceOnUse" cx="57" cy="0" r="558" gradientTransform="scale(1 0.62)">
 <stop offset="0" stop-color="#fff" stop-opacity="1"/><stop offset="0.35" stop-color="#fff" stop-opacity=".95"/><stop offset="0.7" stop-color="#fff" stop-opacity=".45"/><stop offset="1" stop-color="#fff" stop-opacity="0"/>
</radialGradient>
<linearGradient id="lwl" x1="0" y1="0" x2="1" y2="0"><stop offset="0" stop-color="#fff" stop-opacity=".3"/><stop offset="0.35" stop-color="#fff" stop-opacity=".15"/><stop offset="0.75" stop-color="#fff" stop-opacity="0"/></linearGradient>
<radialGradient id="balll" cx="0.50" cy="0.25" r="0.82" fx="0.50" fy="0.20">
 <stop offset="0" stop-color="#a9be12"/><stop offset="0.25" stop-color="#a0b50e"/><stop offset="0.45" stop-color="#95a90b"/><stop offset="0.65" stop-color="#8b9e09"/><stop offset="0.84" stop-color="#809208"/><stop offset="1" stop-color="#6a7a05"/>
</radialGradient>
<radialGradient id="hll" cx="0.5" cy="0.5" r="0.5"><stop offset="0" stop-color="#c9dc48" stop-opacity=".95"/><stop offset="1" stop-color="#c6d944" stop-opacity="0"/></radialGradient>
<radialGradient id="dkl" cx="0.5" cy="0.5" r="0.5"><stop offset="0" stop-color="#5d6c05" stop-opacity=".45"/><stop offset="1" stop-color="#5d6c05" stop-opacity="0"/></radialGradient>
<radialGradient id="rfl" gradientUnits="userSpaceOnUse" cx="342.5" cy="680.5" r="300" gradientTransform="translate(0 258.6) scale(1 0.62)"><stop offset="0" stop-color="#e6e8d4"/><stop offset="0.3" stop-color="#eeefe3"/><stop offset="0.6" stop-color="#f4f5ee"/><stop offset="1" stop-color="#fdfdfb"/></radialGradient>
<filter id="fzl" x="0" y="0" width="1" height="1" color-interpolation-filters="sRGB">
 <feTurbulence type="fractalNoise" baseFrequency="0.11 0.15" numOctaves="3" seed="3" result="n"/>
 <feColorMatrix in="n" type="matrix" values="0 0 0 0 0.33  0 0 0 0 0.38  0 0 0 0 0.0  0.9 0.9 0 0 -0.62"/>
</filter>
<filter id="fz2l" x="0" y="0" width="1" height="1" color-interpolation-filters="sRGB">
 <feTurbulence type="fractalNoise" baseFrequency="0.10 0.13" numOctaves="3" seed="12" result="n"/>
 <feColorMatrix in="n" type="matrix" values="0 0 0 0 0.78  0 0 0 0 0.86  0 0 0 0 0.20  -0.9 -0.9 0 0 1.12"/>
</filter>
<filter id="fz3l" x="0" y="0" width="1" height="1" color-interpolation-filters="sRGB">
 <feTurbulence type="fractalNoise" baseFrequency="0.02 0.026" numOctaves="2" seed="5" result="n"/>
 <feColorMatrix in="n" type="matrix" values="0 0 0 0 0.35  0 0 0 0 0.40  0 0 0 0 0.0  1.2 1.2 0 0 -0.95"/>
</filter>
<linearGradient id="dgl" gradientUnits="userSpaceOnUse" x1="127.5" y1="0" x2="462.5" y2="0"><stop offset="0" stop-color="#8f8f92" stop-opacity="1"/><stop offset="0.45" stop-color="#8f8f92" stop-opacity=".85"/><stop offset="0.8" stop-color="#8f8f92" stop-opacity=".35"/><stop offset="1" stop-color="#8f8f92" stop-opacity=".25"/></linearGradient>
<clipPath id="cpl"><circle cx="342.5" cy="415.5" r="275"/></clipPath>
<clipPath id="sml"><path d="M210.0 166.0 C207.9 168.7 203.2 176.8 197.3 182.1 C191.4 187.4 181.6 191.8 174.4 197.8 C167.2 203.8 159.9 210.1 153.9 218.3 C147.9 226.5 141.6 237.9 138.2 247.2 C134.8 256.4 133.0 265.4 133.4 273.8 C133.8 282.2 136.2 289.5 140.6 297.9 C145.0 306.3 151.0 315.5 159.9 324.4 C168.7 333.2 180.8 342.9 193.7 351.0 C206.6 359.1 221.8 366.7 237.1 372.7 C252.4 378.7 269.2 383.9 285.3 387.1 C301.4 390.3 319.0 391.5 333.6 392.0 C348.2 392.5 362.3 391.0 372.8 390.0 C383.3 389.0 386.4 388.2 396.7 386.0 C407.1 383.8 422.8 380.4 434.9 376.5 C447.0 372.6 458.6 367.7 469.6 362.6 C480.6 357.5 491.3 350.2 500.9 346.1 C510.4 342.1 518.2 339.8 526.9 338.3 C535.6 336.9 545.2 336.7 553.0 337.4 C560.8 338.1 567.4 339.8 573.8 342.7 C580.2 345.6 586.0 349.9 591.2 354.8 C596.4 359.7 601.2 365.8 605.0 372.2 C608.8 378.6 611.5 387.0 613.7 393.0 C615.9 399.0 616.3 402.2 618.0 408.0 C619.7 413.8 623.0 424.7 624.0 428.0 L628.0 376.0 C625.7 372.3 617.2 359.8 614.0 354.0 C610.8 348.2 610.9 345.5 608.5 341.0 C606.1 336.5 603.8 331.9 599.8 327.0 C595.8 322.1 590.6 315.9 584.2 311.4 C577.9 306.9 569.8 302.6 561.7 300.1 C553.6 297.6 544.3 296.7 535.6 296.6 C526.9 296.5 518.3 297.4 509.6 299.3 C500.9 301.2 493.6 303.7 483.5 308.0 C473.4 312.3 461.8 320.4 448.8 325.3 C435.8 330.2 419.9 334.2 405.4 337.4 C390.9 340.6 376.4 343.2 362.0 344.6 C347.6 346.1 333.5 346.9 319.1 346.1 C304.7 345.4 289.4 343.3 275.7 340.1 C262.0 336.9 249.2 332.2 237.1 326.8 C225.0 321.4 212.6 314.3 203.3 307.5 C194.1 300.7 187.2 293.0 181.6 285.8 C176.0 278.6 172.1 270.9 169.5 264.1 C166.9 257.3 166.1 252.0 165.9 244.8 C165.7 237.6 166.1 228.1 168.3 220.7 C170.5 213.3 174.0 206.5 179.2 200.2 C184.4 193.9 193.7 188.4 199.5 183.0 C205.3 177.6 211.6 170.5 214.0 168.0 Z"/></clipPath>
<filter id="bll" x="-.1" y="-.1" width="1.2" height="1.2"><feGaussianBlur stdDeviation="2.2"/></filter>
<filter id="bsl" x="-.1" y="-.1" width="1.2" height="1.2"><feGaussianBlur stdDeviation="0.7"/></filter>
</defs>
<rect width="715" height="826" fill="url(#bgl)"/>
<rect width="715" height="826" fill="url(#whl)"/>
<rect width="715" height="826" fill="url(#lwl)"/>
<ellipse cx="342.5" cy="828" rx="266" ry="230" fill="url(#rfl)"/>
<g clip-path="url(#cpl)">
<circle cx="342.5" cy="415.5" r="275" fill="url(#balll)"/>
<ellipse cx="192.5" cy="565.5" rx="190" ry="170" fill="url(#dkl)"/>
<ellipse cx="77.5" cy="455.5" rx="170" ry="330" fill="url(#dkl)" opacity=".9"/>
<ellipse cx="352.5" cy="700.5" rx="300" ry="125" fill="url(#dkl)"/>
<ellipse cx="507.5" cy="475.5" rx="130" ry="170" fill="url(#hll)" opacity=".32"/>
<ellipse cx="227.5" cy="247.5" rx="78" ry="36" fill="url(#hll)" transform="rotate(-28 227.5 247.5)"/>
<ellipse cx="402.5" cy="215.5" rx="85" ry="36" fill="url(#hll)" transform="rotate(8 402.5 215.5)"/>
<ellipse cx="432.5" cy="400.5" rx="75" ry="20" fill="url(#hll)" opacity=".55" transform="rotate(-12 432.5 400.5)"/>
<rect x="67.5" y="140.5" width="550" height="550" filter="url(#fz3l)" opacity=".20"/>
<rect x="67.5" y="140.5" width="550" height="550" filter="url(#fzl)" opacity=".35"/>
<rect x="67.5" y="140.5" width="550" height="550" filter="url(#fz2l)" opacity=".20"/>
<path d="M202.0 654.0 C208.7 657.3 227.0 668.3 242.0 674.0 C257.0 679.7 274.5 684.7 292.0 688.0 C309.5 691.3 328.7 694.0 347.0 694.0 C365.3 694.0 382.8 691.7 402.0 688.0 C421.2 684.3 443.3 680.0 462.0 672.0 C480.7 664.0 505.3 645.3 514.0 640.0 L504.0 648.0 C495.3 651.0 469.0 661.2 452.0 666.0 C435.0 670.8 418.7 674.5 402.0 677.0 C385.3 679.5 367.8 680.5 352.0 681.0 C336.2 681.5 322.0 681.2 307.0 680.0 C292.0 678.8 277.5 676.7 262.0 674.0 C246.5 671.3 222.0 665.7 214.0 664.0 Z" fill="#ababad" filter="url(#bsl)"/>
<g filter="url(#bsl)"><path d="M210.0 166.0 C207.9 168.7 203.2 176.8 197.3 182.1 C191.4 187.4 181.6 191.8 174.4 197.8 C167.2 203.8 159.9 210.1 153.9 218.3 C147.9 226.5 141.6 237.9 138.2 247.2 C134.8 256.4 133.0 265.4 133.4 273.8 C133.8 282.2 136.2 289.5 140.6 297.9 C145.0 306.3 151.0 315.5 159.9 324.4 C168.7 333.2 180.8 342.9 193.7 351.0 C206.6 359.1 221.8 366.7 237.1 372.7 C252.4 378.7 269.2 383.9 285.3 387.1 C301.4 390.3 319.0 391.5 333.6 392.0 C348.2 392.5 362.3 391.0 372.8 390.0 C383.3 389.0 386.4 388.2 396.7 386.0 C407.1 383.8 422.8 380.4 434.9 376.5 C447.0 372.6 458.6 367.7 469.6 362.6 C480.6 357.5 491.3 350.2 500.9 346.1 C510.4 342.1 518.2 339.8 526.9 338.3 C535.6 336.9 545.2 336.7 553.0 337.4 C560.8 338.1 567.4 339.8 573.8 342.7 C580.2 345.6 586.0 349.9 591.2 354.8 C596.4 359.7 601.2 365.8 605.0 372.2 C608.8 378.6 611.5 387.0 613.7 393.0 C615.9 399.0 616.3 402.2 618.0 408.0 C619.7 413.8 623.0 424.7 624.0 428.0 L628.0 376.0 C625.7 372.3 617.2 359.8 614.0 354.0 C610.8 348.2 610.9 345.5 608.5 341.0 C606.1 336.5 603.8 331.9 599.8 327.0 C595.8 322.1 590.6 315.9 584.2 311.4 C577.9 306.9 569.8 302.6 561.7 300.1 C553.6 297.6 544.3 296.7 535.6 296.6 C526.9 296.5 518.3 297.4 509.6 299.3 C500.9 301.2 493.6 303.7 483.5 308.0 C473.4 312.3 461.8 320.4 448.8 325.3 C435.8 330.2 419.9 334.2 405.4 337.4 C390.9 340.6 376.4 343.2 362.0 344.6 C347.6 346.1 333.5 346.9 319.1 346.1 C304.7 345.4 289.4 343.3 275.7 340.1 C262.0 336.9 249.2 332.2 237.1 326.8 C225.0 321.4 212.6 314.3 203.3 307.5 C194.1 300.7 187.2 293.0 181.6 285.8 C176.0 278.6 172.1 270.9 169.5 264.1 C166.9 257.3 166.1 252.0 165.9 244.8 C165.7 237.6 166.1 228.1 168.3 220.7 C170.5 213.3 174.0 206.5 179.2 200.2 C184.4 193.9 193.7 188.4 199.5 183.0 C205.3 177.6 211.6 170.5 214.0 168.0 Z" fill="#ababad"/></g>
<g clip-path="url(#sml)">
 <path d="M213.1 167.6 C211.3 169.6 206.0 176.2 201.9 180.0 C197.9 183.8 193.2 186.9 189.0 190.5 C184.7 194.1 180.0 197.3 176.4 201.4 C172.7 205.5 169.5 210.3 167.1 215.2 C164.7 220.1 163.1 225.5 161.9 230.9 C160.6 236.2 159.9 241.7 159.8 247.2 C159.7 252.6 160.1 258.2 161.3 263.5 C162.5 268.8 164.5 274.1 167.0 279.0 C169.4 283.9 172.7 288.5 176.0 292.9 C179.4 297.3 183.1 301.6 187.1 305.4 C191.1 309.2 195.6 312.6 200.1 315.9 C204.6 319.2 209.3 322.1 214.1 324.9 C218.9 327.7 223.9 330.3 228.9 332.8 C233.9 335.2 239.0 337.4 244.2 339.5 C249.3 341.5 254.6 343.4 259.9 345.1 C265.2 346.7 270.6 348.2 276.0 349.4 C281.4 350.7 286.9 351.7 292.4 352.6 C297.9 353.5 303.4 354.3 309.0 354.8 C314.5 355.3 320.1 355.7 325.6 355.8 C331.2 356.0 336.8 355.9 342.3 355.7 C347.9 355.5 353.5 355.2 359.0 354.7 C364.6 354.3 370.1 353.6 375.6 352.9 C381.1 352.2 386.6 351.3 392.1 350.3 C397.6 349.3 403.1 348.1 408.5 346.9 C414.0 345.7 419.4 344.4 424.8 342.9 C430.2 341.5 435.6 340.0 440.8 338.2 C446.1 336.4 451.3 334.3 456.3 332.0 C461.4 329.7 466.3 326.9 471.3 324.5 C476.3 322.0 481.3 319.6 486.4 317.4 C491.5 315.2 496.7 313.0 501.9 311.3 C507.2 309.7 512.7 308.3 518.1 307.3 C523.6 306.4 529.2 305.8 534.7 305.7 C540.3 305.6 545.9 305.8 551.4 306.6 C556.9 307.4 562.4 308.7 567.6 310.6 C572.7 312.6 577.8 315.2 582.3 318.4 C586.9 321.5 591.1 325.3 594.9 329.4 C598.6 333.5 602.1 338.0 604.9 342.7 C607.7 347.5 609.5 352.9 611.8 357.9 C614.2 363.0 616.5 368.0 619.0 372.9 C621.6 377.8 625.8 385.0 627.1 387.4" fill="none" stroke="url(#dgl)" stroke-width="13" filter="url(#bll)"/>
 <path d="M211.8 166.9 C209.9 169.1 204.8 176.3 200.6 180.3 C196.4 184.3 191.3 187.2 186.7 190.8 C182.2 194.4 177.3 197.8 173.2 201.8 C169.2 205.9 165.4 210.5 162.4 215.4 C159.4 220.2 157.0 225.6 155.1 230.9 C153.1 236.3 151.5 241.8 150.6 247.4 C149.7 253.0 149.1 258.8 149.6 264.4 C150.1 270.0 151.4 275.8 153.4 281.1 C155.5 286.4 158.6 291.5 161.7 296.3 C164.9 301.1 168.6 305.8 172.5 310.0 C176.5 314.2 180.9 318.1 185.4 321.7 C189.9 325.3 194.7 328.7 199.6 331.9 C204.4 335.0 209.4 338.0 214.5 340.8 C219.6 343.6 224.9 346.1 230.2 348.5 C235.5 350.9 240.8 353.1 246.3 355.1 C251.8 357.1 257.3 358.9 262.9 360.5 C268.4 362.1 274.1 363.6 279.8 364.8 C285.4 366.1 291.1 367.2 296.9 368.0 C302.6 368.9 308.4 369.5 314.2 370.0 C320.0 370.4 325.8 370.6 331.6 370.7 C337.4 370.8 343.2 370.8 349.1 370.5 C354.9 370.3 360.7 369.8 366.5 369.3 C372.2 368.7 378.0 368.0 383.8 367.1 C389.5 366.2 395.3 365.2 401.0 364.0 C406.7 362.8 412.3 361.5 418.0 360.0 C423.6 358.6 429.3 357.2 434.8 355.4 C440.4 353.7 445.9 351.7 451.2 349.5 C456.6 347.3 461.8 344.6 467.1 342.2 C472.4 339.7 477.6 337.1 482.9 334.7 C488.2 332.2 493.3 329.5 498.7 327.4 C504.1 325.3 509.6 323.4 515.2 322.1 C520.9 320.7 526.6 319.8 532.4 319.3 C538.2 318.9 544.1 318.9 549.8 319.5 C555.6 320.1 561.5 321.1 566.9 323.0 C572.3 324.9 577.7 327.6 582.4 330.8 C587.2 334.0 591.6 338.1 595.5 342.4 C599.3 346.7 602.8 351.5 605.7 356.5 C608.5 361.6 610.3 367.2 612.5 372.6 C614.7 377.9 616.7 383.4 618.9 388.7 C621.1 394.1 624.6 402.0 625.8 404.6" fill="none" stroke="#c3c3c5" stroke-opacity=".75" stroke-width="6" filter="url(#bll)"/>
 <path d="M212.1 167.0 C210.2 169.2 205.0 176.3 200.9 180.2 C196.7 184.2 191.7 187.2 187.2 190.8 C182.7 194.3 177.9 197.7 173.9 201.8 C169.9 205.9 166.3 210.5 163.4 215.3 C160.5 220.2 158.3 225.6 156.5 230.9 C154.7 236.2 153.3 241.8 152.6 247.4 C151.8 252.9 151.4 258.7 152.1 264.2 C152.7 269.8 154.2 275.4 156.3 280.7 C158.4 285.9 161.6 290.9 164.8 295.6 C168.0 300.3 171.7 304.9 175.6 309.0 C179.6 313.2 184.0 316.9 188.5 320.5 C193.0 324.0 197.8 327.3 202.6 330.4 C207.5 333.5 212.5 336.4 217.6 339.1 C222.6 341.8 227.9 344.3 233.1 346.6 C238.4 348.9 243.8 351.1 249.2 353.0 C254.6 354.9 260.1 356.6 265.7 358.2 C271.2 359.7 276.8 361.0 282.4 362.2 C288.1 363.4 293.7 364.4 299.4 365.2 C305.1 366.0 310.9 366.6 316.6 367.0 C322.4 367.4 328.1 367.5 333.9 367.5 C339.6 367.5 345.4 367.5 351.2 367.2 C356.9 366.9 362.7 366.4 368.4 365.8 C374.1 365.2 379.9 364.4 385.6 363.5 C391.2 362.6 396.9 361.6 402.6 360.4 C408.2 359.2 413.8 357.8 419.4 356.4 C425.0 355.0 430.6 353.6 436.1 351.8 C441.6 350.0 447.0 348.0 452.3 345.8 C457.6 343.5 462.8 340.9 468.0 338.4 C473.2 336.0 478.4 333.4 483.6 331.0 C488.9 328.6 494.0 326.0 499.4 324.0 C504.8 322.0 510.3 320.2 515.8 318.9 C521.4 317.7 527.2 316.8 532.9 316.4 C538.6 316.1 544.5 316.1 550.2 316.7 C555.9 317.4 561.7 318.4 567.0 320.3 C572.4 322.2 577.7 324.9 582.4 328.2 C587.1 331.4 591.5 335.4 595.3 339.6 C599.2 343.9 602.7 348.6 605.5 353.6 C608.4 358.6 610.2 364.2 612.4 369.5 C614.6 374.8 616.6 380.1 618.9 385.4 C621.2 390.6 624.9 398.4 626.1 401.0" fill="none" stroke="url(#dgl)" stroke-opacity=".8" stroke-width="1.3" filter="url(#bsl)"/>
</g>
</g>
</svg><svg class="a" style="left:180.0px;top:5.5px" width="20" height="20" viewBox="0 0 20 20"><path d="M8 12 L2.5 17.5" stroke="#5f9fc4" stroke-width="2.6" stroke-linecap="round"/><circle cx="11.5" cy="8" r="5.6" fill="#f4f6f8" stroke="#8a8f96" stroke-width="1.2"/><path d="M11.5 4.5 V11.5 M8 8 H15" stroke="#555" stroke-width=".9"/><circle cx="11.5" cy="8" r="2" fill="#f4f6f8" stroke="#555" stroke-width=".7"/></svg><svg class="a" style="left:206.0px;top:5.5px" width="20" height="20" viewBox="0 0 20 20"><path d="M8 12 L2.5 17.5" stroke="#5f9fc4" stroke-width="2.6" stroke-linecap="round"/><circle cx="11.5" cy="8" r="5.6" fill="#f4f6f8" stroke="#8a8f96" stroke-width="1.2"/><rect x="6" y="1.5" width="12.5" height="12" fill="none" stroke="#444" stroke-width="1" stroke-dasharray="2.5 2"/></svg><svg class="a" style="left:232.0px;top:6.5px" width="20" height="18" viewBox="0 0 20 18"><path d="M2 12 L13 4 L17 8 L6 16 Z" fill="#e3e5e8" stroke="#8a8f96" stroke-width="1"/><path d="M13 4 L16 1.5 L19 5 L17 8 Z" fill="#cfd2d6" stroke="#8a8f96" stroke-width="1"/><path d="M7 13 H15 M11 10.5 L8 13 L11 15.5" stroke="#2e84b4" stroke-width="1.5" fill="none"/></svg><svg class="a" style="left:258.0px;top:6.5px" width="20" height="18" viewBox="0 0 20 18"><path d="M2 7 C2 1 18 1 18 7 V15 H13 V9 C13 6.5 7 6.5 7 9 V15 H2 Z" fill="#e6e8eb" stroke="#666" stroke-width="1"/><path d="M2 7 V15 H7 V9 Z M13 9 V15 H18 V7 Z" fill="#4a9fce" stroke="#1c5f87" stroke-width="1"/></svg><svg class="a" style="left:283.0px;top:5.5px" width="20" height="20" viewBox="0 0 20 20"><path d="M3 13 L13 4 L17 8 L7 17 Z" fill="#e3e5e8" stroke="#8a8f96" stroke-width="1"/><path d="M10 1 L7 7 H11 L8 12" stroke="#f0a020" stroke-width="2" fill="none"/><text x="15" y="19" font-family="Liberation Sans" font-size="9" font-weight="bold" fill="#2e84b4" text-anchor="middle">A</text></svg><svg class="a" style="left:309.0px;top:5.5px" width="20" height="20" viewBox="0 0 20 20"><path d="M1.5 7 L7 2.5 H18.5 V13 L13 18 H1.5 Z" fill="#f4f6f8" stroke="#555" stroke-width="1" stroke-linejoin="round"/><rect x="1.5" y="7" width="11.5" height="11" fill="#8cc6e6" stroke="#1c5f87" stroke-width="1"/><path d="M13 7 L18.5 2.5" stroke="#555"/><path d="M10 3 v3 M12 4 l1.5 1.2 M15.5 8 h-2" stroke="#333" stroke-width=".8" stroke-dasharray="1 1"/></svg><svg class="a" style="left:350.0px;top:5.5px" width="20" height="20" viewBox="0 0 20 20"><path d="M2 5 L9 2 L18 5 V15 L11 18.5 L2 15 Z" fill="#f4f6f8" stroke="#666" stroke-width="1" stroke-linejoin="round"/><path d="M2 5 L11 8 V18.5 L2 15 Z" fill="#5aaad6" stroke="#1c5f87" stroke-width="1" stroke-linejoin="round"/><path d="M11 8 L18 5" stroke="#666"/></svg><svg class="a" style="left:388.0px;top:7.5px" width="22" height="16" viewBox="0 0 22 16"><path d="M1.5 8 C5 2.5 17 2.5 20.5 8 C17 13.5 5 13.5 1.5 8 Z" fill="#eceef0" stroke="#9b9fa5" stroke-width="1.1"/><circle cx="11" cy="8" r="3.8" fill="#8e9297"/><circle cx="11" cy="8" r="1.7" fill="#4b4e52"/><path d="M11 1 V15" stroke="#6a6d72" stroke-width="1"/></svg><svg class="a" style="left:429.0px;top:4.5px" width="22" height="22" viewBox="0 0 22 22"><circle cx="10" cy="9" r="7.8" fill="#f2f2f2" stroke="#777" stroke-width=".6"/><path d="M10 9 L2.5 11 A7.8 7.8 0 0 1 11 1.3 Z" fill="#3d7fd9"/><path d="M10 9 L11 1.3 A7.8 7.8 0 0 1 17 12.5 Z" fill="#e03a2a"/><path d="M10 9 L17 12.5 A7.8 7.8 0 0 1 2.5 11 Z" fill="#41b649"/><ellipse cx="8" cy="5.5" rx="3.5" ry="2" fill="#fff" opacity=".35"/><path d="M10 19 L12 14.5 L19 8.5 L21 10.5 L14.5 17 Z" fill="#f3c21c" stroke="#6b5206" stroke-width=".9"/></svg><svg class="a" style="left:455.0px;top:4.5px" width="22" height="22" viewBox="0 0 22 22"><circle cx="10" cy="9" r="7.8" fill="#f2f2f2" stroke="#777" stroke-width=".6"/><path d="M10 9 L2.5 11 A7.8 7.8 0 0 1 11 1.3 Z" fill="#3d7fd9"/><path d="M10 9 L11 1.3 A7.8 7.8 0 0 1 17 12.5 Z" fill="#e03a2a"/><path d="M10 9 L17 12.5 A7.8 7.8 0 0 1 2.5 11 Z" fill="#41b649"/><ellipse cx="8" cy="5.5" rx="3.5" ry="2" fill="#fff" opacity=".35"/><rect x="2" y="13.5" width="17" height="7.5" fill="#fdfdfd" stroke="#333" stroke-width=".9"/><path d="M2 13.5 h4 v3.7 h-4 Z M10 13.5 h4 v3.7 h-4 Z M6 17.2 h4 v3.8 h-4 Z M14 17.2 h5 v3.8 h-5 Z" fill="#333"/></svg><svg class="a" style="left:496.0px;top:6.5px" width="20" height="18" viewBox="0 0 20 18"><rect x="1.5" y="1.5" width="17" height="11" fill="#d9dcdf" stroke="#555" stroke-width="1.3"/><path d="M10 12.5 V16 M5.5 16.5 H14.5" stroke="#555" stroke-width="1.5"/></svg><div class="dd" style="left:336px;top:14.5px;border-top-color:#9a9a9c"></div><div class="dd" style="left:376px;top:14.5px;border-top-color:#9a9a9c"></div><div class="dd" style="left:415px;top:14.5px;border-top-color:#9a9a9c"></div><div class="dd" style="left:481px;top:14.5px;border-top-color:#9a9a9c"></div><div class="dd" style="left:522px;top:14.5px;border-top-color:#9a9a9c"></div><svg class="a" style="left:10px;top:733px" width="60" height="52" viewBox="0 0 60 52"><path d="M30 36 L30 14" stroke="#35b03a" stroke-width="2.4"/><path d="M30 7 L26.8 15 H33.2 Z" fill="#1f8a25"/>
<path d="M30 36 L48 44.5" stroke="#c4282a" stroke-width="2.6"/><path d="M54 47.5 L45 47.5 L48 41 Z" fill="#c4282a"/>
<path d="M30 36 L13 44.5" stroke="#1f2fc0" stroke-width="2.6"/><path d="M6 47.5 L15 47.5 L12 41 Z" fill="#1f2fc0"/>
<text x="30" y="5" font-family="Liberation Sans" font-size="6.5" font-weight="bold" fill="#2b8a30" text-anchor="middle">Y</text>
<text x="57.5" y="50" font-family="Liberation Sans" font-size="6.5" font-weight="bold" fill="#e05a5a" text-anchor="middle">X</text>
<text x="2.5" y="50" font-family="Liberation Sans" font-size="6.5" font-weight="bold" fill="#4a55d0" text-anchor="middle">Z</text></svg><div class="t" style="left:10.800000000000011px;top:809px;transform:scaleX(1.0211);font-weight:bold;font-size:13px;color:#111;">*Isometric</div></div><div class="a" style="left:8px;top:856px;width:943px;height:15px;background:#fbfbfd;border-top:1px solid #77777a"></div><div class="tree" style="left:8px;top:30px;width:229px;height:826px"><div class="a" style="left:0;top:0;width:229px;height:5px;background:linear-gradient(180deg,#c9c9cb 0%,#efeff1 100%)"></div><div class="a" style="left:0;top:20px;width:229px;height:2px;background:#dededf"></div><div class="a" style="left:108.5px;top:10.5px;width:5px;height:5px;border-radius:3px;background:#b9b9bb;border:1px solid #9a9a9c"></div><div class="a" style="left:0;top:50px;width:229px;height:1px;background:#c8c8ca"></div><div class="ptab" style="left:40px;top:25px;border-left:1px solid #a9a9ab;width:41px"></div><div class="ptab" style="left:81px;top:25px;width:40px"></div><div class="ptab" style="left:121px;top:25px;width:40px"></div><div class="ptab" style="left:161px;top:25px;width:40px"></div><svg class="a" style="left:12.0px;top:28.5px" width="20" height="20" viewBox="0 0 18 18"><path d="M1.5 8.5 L4.5 6.5 L4.5 3.5 L8 1.5 L11.5 3 L11.5 6.5 L13.5 5.8 L16.5 8 L16.5 12.5 L10.5 16.5 L1.5 12 Z" fill="#f1bf17" stroke="#4f3d05" stroke-width="1.1" stroke-linejoin="round"/>
<path d="M4.5 3.5 L8 1.5 L11.5 3 L8 5.2 Z" fill="#fde98f" stroke="#4f3d05" stroke-width=".7" stroke-linejoin="round"/>
<path d="M1.5 8.5 L4.5 6.5 L8 8.5 L11.5 6.5 L13.5 5.8 L16.5 8 L10.5 12.5 Z" fill="#fbdc5e" stroke="#4f3d05" stroke-width=".7" stroke-linejoin="round"/>
<path d="M8 5.2 L8 8.5 M10.5 12.5 L10.5 16.5" stroke="#4f3d05" stroke-width=".7" fill="none"/>
<path d="M4.5 3.5 L8 5.2 L8 8.5 L4.5 6.5 Z" fill="#f1bf17" stroke="#4f3d05" stroke-width=".7" stroke-linejoin="round"/></svg><svg class="a" style="left:52.0px;top:29.0px" width="18" height="18" viewBox="0 0 18 18"><rect x="1" y="1" width="16" height="16" rx="1" fill="#fdfdfd" stroke="#1c5f87" stroke-width="1.3"/><rect x="1" y="1" width="16" height="3" fill="#3e93c4"/><rect x="3" y="6.3" width="3.6" height="2.4" fill="#3e93c4" stroke="#1c5f87" stroke-width=".6"/><rect x="3" y="10" width="3.6" height="2.4" fill="#3e93c4" stroke="#1c5f87" stroke-width=".6"/><rect x="3" y="13.6" width="3.6" height="2.1" fill="#3e93c4" stroke="#1c5f87" stroke-width=".6"/><path d="M8.3 7.5 H15 M8.3 11.2 H15 M8.3 14.7 H15" stroke="#333" stroke-width="1.1"/></svg><svg class="a" style="left:93.0px;top:29.0px" width="16" height="18" viewBox="0 0 16 18"><path d="M4.5 1 V15 H10 M4.5 8 H9" fill="none" stroke="#333" stroke-width="1.2"/><rect x="2.3" y="1" width="4.4" height="3.8" fill="#fdfdfd" stroke="#333" stroke-width="1.1"/><rect x="8.5" y="2" width="5" height="4.4" rx="1" fill="#fdfdfd" stroke="#333" stroke-width="1.1"/><rect x="8.8" y="6.2" width="4.4" height="3.8" fill="#fdfdfd" stroke="#333" stroke-width="1.1"/><rect x="9.8" y="12.6" width="4.6" height="4.4" rx="1" fill="#fdfdfd" stroke="#333" stroke-width="1.1"/></svg><svg class="a" style="left:131.0px;top:28.0px" width="20" height="20" viewBox="0 0 20 20"><circle cx="10" cy="10" r="5.6" fill="none" stroke="#111" stroke-width="1.7"/><path d="M10 1 V19 M1 10 H19" stroke="#111" stroke-width="1.7"/></svg><svg class="a" style="left:171.0px;top:28.0px" width="20" height="20" viewBox="0 0 20 20"><circle cx="10" cy="10" r="8.6" fill="#f2f2f2" stroke="#666" stroke-width=".8"/><path d="M10 10 L10 1.4 A8.6 8.6 0 0 0 1.8 7.5 Z" fill="#3d7fd9"/><path d="M10 10 L1.8 7.5 A8.6 8.6 0 0 0 6.5 17.9 Z" fill="#41b649"/><path d="M10 10 L6.5 17.9 A8.6 8.6 0 0 0 17.7 13.8 Z" fill="#f3c21c"/><path d="M10 10 L17.7 13.8 A8.6 8.6 0 0 0 18.4 8 Z" fill="#e03a2a"/><path d="M10 10 L18.4 8 A8.6 8.6 0 0 0 10 1.4 Z" fill="#e03a2a"/><path d="M10.5 2.2 C14 2.5 17 5 17.6 8.6 C15 10 11 6 10.5 2.2 Z" fill="#1a1a1a"/></svg><svg class="a" style="left:210.0px;top:30.0px" width="10" height="14" viewBox="0 0 10 14"><path d="M3 2 L8 7 L3 12" stroke="#222" stroke-width="1.8" fill="none"/></svg><div class="a" style="left:4px;top:52px;width:220px;height:24px;border:1px solid #d6d6d8;background:#f9f9fb"></div><svg class="a" style="left:6.0px;top:55.0px" width="18" height="20" viewBox="0 0 18 20"><path d="M1.2 3.5 H16.8 L10.5 11 V17 L7.5 18.8 V11 Z" fill="#fdfdfd" stroke="#333" stroke-width="1.2" stroke-linejoin="round"/><path d="M0.8 2.2 H17.2" stroke="#2e84b4" stroke-width="2.6"/></svg><svg class="a" style="left:3.0px;top:78.5px" width="20" height="20" viewBox="0 0 18 18"><path d="M1.5 8.5 L4.5 6.5 L4.5 3.5 L8 1.5 L11.5 3 L11.5 6.5 L13.5 5.8 L16.5 8 L16.5 12.5 L10.5 16.5 L1.5 12 Z" fill="#f1bf17" stroke="#4f3d05" stroke-width="1.1" stroke-linejoin="round"/>
<path d="M4.5 3.5 L8 1.5 L11.5 3 L8 5.2 Z" fill="#fde98f" stroke="#4f3d05" stroke-width=".7" stroke-linejoin="round"/>
<path d="M1.5 8.5 L4.5 6.5 L8 8.5 L11.5 6.5 L13.5 5.8 L16.5 8 L10.5 12.5 Z" fill="#fbdc5e" stroke="#4f3d05" stroke-width=".7" stroke-linejoin="round"/>
<path d="M8 5.2 L8 8.5 M10.5 12.5 L10.5 16.5" stroke="#4f3d05" stroke-width=".7" fill="none"/>
<path d="M4.5 3.5 L8 5.2 L8 8.5 L4.5 6.5 Z" fill="#f1bf17" stroke="#4f3d05" stroke-width=".7" stroke-linejoin="round"/></svg><div class="ti" style="left:26.700000000000003px;top:82px;transform:scaleX(0.9741);">Tennis_Ball (Default) &lt;&lt;Default&gt;_Disp</div><div class="arr" style="left:8px;top:106px"></div><svg class="a" style="left:25.5px;top:101.0px" width="19" height="18" viewBox="0 0 19 18"><path d="M1.5 16.5 V2.5 H7 L8.5 4.5 H14.5 V6" fill="#f4f4f6" stroke="#3a3a3c" stroke-width="1"/>
<rect x="2.5" y="6.5" width="15" height="10" rx="1" fill="#f0f0f2" stroke="#3a3a3c" stroke-width="1"/><circle cx="10.5" cy="11.5" r="3.4" fill="#fff" stroke="#2a79ab" stroke-width="1.3"/><path d="M10.5 9.6 V11.7 H12.3" stroke="#333" stroke-width="1" fill="none"/><path d="M5.5 12 l1.8 2 l1.5 -2.3" stroke="#2a79ab" stroke-width="1.2" fill="none"/></svg><div class="ti" style="left:49.4px;top:104px;transform:scaleX(0.9988);">History</div><svg class="a" style="left:25.5px;top:123.0px" width="19" height="18" viewBox="0 0 19 18"><path d="M1.5 16.5 V2.5 H7 L8.5 4.5 H14.5 V6" fill="#f4f4f6" stroke="#3a3a3c" stroke-width="1"/>
<rect x="2.5" y="6.5" width="15" height="10" rx="1" fill="#f0f0f2" stroke="#3a3a3c" stroke-width="1"/><circle cx="10.3" cy="11.6" r="3.6" fill="#fff" stroke="#2a79ab" stroke-width="1.2"/><path d="M10.3 11.6 L12.6 9.2" stroke="#333" stroke-width="1.2"/><path d="M8 14.3 A3.6 3.6 0 0 0 13 14" stroke="#d0401d" stroke-width="1.6" fill="none"/></svg><div class="ti" style="left:49.4px;top:126px;transform:scaleX(0.8903);">Sensors</div><div class="arr" style="left:8px;top:150px"></div><svg class="a" style="left:25.5px;top:145.0px" width="19" height="18" viewBox="0 0 19 18"><path d="M1.5 16.5 V2.5 H7 L8.5 4.5 H14.5 V6" fill="#f4f4f6" stroke="#3a3a3c" stroke-width="1"/>
<rect x="2.5" y="6.5" width="15" height="10" rx="1" fill="#f0f0f2" stroke="#3a3a3c" stroke-width="1"/><text x="10.2" y="15.6" font-family="Liberation Serif" font-size="11" font-weight="bold" fill="#2a79ab" text-anchor="middle">A</text></svg><div class="ti" style="left:49.4px;top:148px;transform:scaleX(1.0128);">Annotations</div><div class="arr" style="left:8px;top:172px"></div><svg class="a" style="left:25.5px;top:167.0px" width="19" height="18" viewBox="0 0 19 18"><path d="M1.5 16.5 V2.5 H7 L8.5 4.5 H14.5 V6" fill="#f4f4f6" stroke="#3a3a3c" stroke-width="1"/>
<rect x="2.5" y="6.5" width="15" height="10" rx="1" fill="#f0f0f2" stroke="#3a3a3c" stroke-width="1"/><path d="M7.5 9.5 L10.5 8.3 L13.5 9.5 V13.5 L10.5 15 L7.5 13.5 Z" fill="#3e93c4" stroke="#134d70" stroke-width=".9"/><path d="M7.5 9.5 L10.5 10.8 L13.5 9.5 M10.5 10.8 V15" stroke="#134d70" stroke-width=".8" fill="none"/></svg><div class="ti" style="left:49.4px;top:170px;transform:scaleX(0.9462);">Solid Bodies(1)</div><svg class="a" style="left:25.5px;top:188.5px" width="19" height="19" viewBox="0 0 19 19"><circle cx="3" cy="3.2" r="1.8" fill="#f4f4f4" stroke="#555" stroke-width=".9"/><circle cx="3" cy="9" r="1.8" fill="#3e93c4" stroke="#1c5f87" stroke-width=".9"/><circle cx="3" cy="15" r="1.8" fill="#f2c31b" stroke="#8a6a00" stroke-width=".9"/>
<path d="M6.5 3.2 H18 M6.5 9 H18 M6.5 15 H11" stroke="#333" stroke-width="1.5"/>
<circle cx="15.3" cy="15.3" r="2.6" fill="#222"/><circle cx="15.3" cy="15.3" r="3.6" fill="none" stroke="#222" stroke-width="1.6" stroke-dasharray="1.5 1.33"/><circle cx="15.3" cy="15.3" r="1" fill="#f7f7f9"/></svg><div class="ti" style="left:49.4px;top:192px;transform:scaleX(1.0039);">Material &lt;not specified&gt;</div><svg class="a" style="left:26.5px;top:210.5px" width="16" height="19" viewBox="0 0 16 19"><path d="M1.5 4.5 L14 2 V14.5 L1.5 17 Z" fill="#fbfbfd" stroke="#3a3a3c" stroke-width="1" stroke-linejoin="round"/>
<path d="M7.7 0.3 V3 M7.7 5 V8 M7.7 10 V13 M7.7 15.2 V18.7" stroke="#3a3a3c" stroke-width="1.1"/></svg><div class="ti" style="left:49.4px;top:214px;transform:scaleX(0.9590);">Front Plane</div><svg class="a" style="left:26.5px;top:232.5px" width="16" height="19" viewBox="0 0 16 19"><path d="M1.5 4.5 L14 2 V14.5 L1.5 17 Z" fill="#fbfbfd" stroke="#3a3a3c" stroke-width="1" stroke-linejoin="round"/>
<path d="M7.7 0.3 V3 M7.7 5 V8 M7.7 10 V13 M7.7 15.2 V18.7" stroke="#3a3a3c" stroke-width="1.1"/></svg><div class="ti" style="left:49.4px;top:236px;transform:scaleX(0.9630);">Top Plane</div><svg class="a" style="left:26.5px;top:254.5px" width="16" height="19" viewBox="0 0 16 19"><path d="M1.5 4.5 L14 2 V14.5 L1.5 17 Z" fill="#fbfbfd" stroke="#3a3a3c" stroke-width="1" stroke-linejoin="round"/>
<path d="M7.7 0.3 V3 M7.7 5 V8 M7.7 10 V13 M7.7 15.2 V18.7" stroke="#3a3a3c" stroke-width="1.1"/></svg><div class="ti" style="left:49.4px;top:258px;transform:scaleX(0.9590);">Right Plane</div><svg class="a" style="left:25.5px;top:277.0px" width="19" height="18" viewBox="0 0 19 18"><path d="M4.5 1.5 V14.5 H17" stroke="#222" stroke-width="1.4" fill="none"/><path d="M4.5 0 L2 4 H7 Z M18.5 14.5 L14.5 12 V17 Z" fill="#222"/></svg><div class="ti" style="left:49.4px;top:280px;transform:scaleX(1.0058);">Origin</div><div class="arr" style="left:8px;top:304px"></div><svg class="a" style="left:25.5px;top:299.0px" width="19" height="18" viewBox="0 0 19 18"><path d="M3 7 C3 2 15 1 16.5 7 C17.5 13 11 17.5 5 16.5 C2 16 1.5 12.5 4 12 C7 11.5 9.5 12 11 9.5 C11.5 8 9 7.5 8 8.5 Z" fill="#3e93c4" stroke="#1c5f87" stroke-width="1"/>
<path d="M6 6 C8 4 12 4 13.5 6" stroke="#a9d3ea" stroke-width="1.2" fill="none"/><path d="M5 9 L14 11" stroke="#0e3a57" stroke-width="1"/></svg><div class="ti" style="left:49.4px;top:302px;transform:scaleX(0.9094);">Revolve1</div><svg class="a" style="left:25.5px;top:321.0px" width="19" height="18" viewBox="0 0 19 18"><path d="M2 5 L7 2.5 L12 5 L7 8 Z" fill="#fff" stroke="#333" stroke-width="1"/><path d="M2 5 V8 L7 11 V8" fill="#eee" stroke="#333" stroke-width="1"/>
<path d="M9 11 L13.5 9 L18 11 L13.5 13.5 Z M9 11 V14 L13.5 16.5 L18 14 V11 M13.5 13.5 V16.5" fill="#3e93c4" stroke="#1c5f87" stroke-width="1"/>
<path d="M13 2 L17 5 L14.5 5.5 M4 12 L3 16.5 L7.5 15.5 M3.5 16 L8 11.5" stroke="#222" stroke-width="1.3" fill="none"/></svg><div class="ti" style="left:49.4px;top:324px;transform:scaleX(1.0120);">Body-Move/Copy1</div><svg class="a" style="left:25.5px;top:343.0px" width="19" height="18" viewBox="0 0 19 18"><path d="M18 1.5 H1.5 V12 Q1.5 16.5 7 16.5 H18" fill="#fdfdfd" stroke="#444" stroke-width="1"/></svg><div class="ti" style="left:49.4px;top:346px;transform:scaleX(0.9317);">Sketch2</div><svg class="a" style="left:26.5px;top:364.5px" width="16" height="19" viewBox="0 0 16 19"><path d="M1.5 4.5 L14 2 V14.5 L1.5 17 Z" fill="#fbfbfd" stroke="#3a3a3c" stroke-width="1" stroke-linejoin="round"/>
<path d="M7.7 0.3 V3 M7.7 5 V8 M7.7 10 V13 M7.7 15.2 V18.7" stroke="#3a3a3c" stroke-width="1.1"/></svg><div class="ti" style="left:49.4px;top:368px;transform:scaleX(0.9518);">Upper Plane</div><svg class="a" style="left:26.5px;top:386.5px" width="16" height="19" viewBox="0 0 16 19"><path d="M1.5 4.5 L14 2 V14.5 L1.5 17 Z" fill="#fbfbfd" stroke="#3a3a3c" stroke-width="1" stroke-linejoin="round"/>
<path d="M7.7 0.3 V3 M7.7 5 V8 M7.7 10 V13 M7.7 15.2 V18.7" stroke="#3a3a3c" stroke-width="1.1"/></svg><div class="ti" style="left:49.4px;top:390px;transform:scaleX(0.9518);">Lower Plane</div><svg class="a" style="left:26.5px;top:408.5px" width="16" height="19" viewBox="0 0 16 19"><path d="M1.5 4.5 L14 2 V14.5 L1.5 17 Z" fill="#fbfbfd" stroke="#3a3a3c" stroke-width="1" stroke-linejoin="round"/>
<path d="M7.7 0.3 V3 M7.7 5 V8 M7.7 10 V13 M7.7 15.2 V18.7" stroke="#3a3a3c" stroke-width="1.1"/></svg><div class="ti" style="left:49.4px;top:412px;transform:scaleX(0.9728);">Right Hand Plane</div><svg class="a" style="left:26.5px;top:430.5px" width="16" height="19" viewBox="0 0 16 19"><path d="M1.5 4.5 L14 2 V14.5 L1.5 17 Z" fill="#fbfbfd" stroke="#3a3a3c" stroke-width="1" stroke-linejoin="round"/>
<path d="M7.7 0.3 V3 M7.7 5 V8 M7.7 10 V13 M7.7 15.2 V18.7" stroke="#3a3a3c" stroke-width="1.1"/></svg><div class="ti" style="left:49.4px;top:434px;transform:scaleX(0.9714);">Left Hand Plane</div><svg class="a" style="left:25.5px;top:453.0px" width="19" height="18" viewBox="0 0 19 18"><path d="M2 4 L6 2 V14 L2 16 Z" fill="#f4f4f6" stroke="#333" stroke-width="1"/><path d="M6 2 L10 4 V16 L6 14" fill="#dcdcde" stroke="#333" stroke-width="1"/>
<path d="M8 4.5 L12 2.5 L17 4.5 V14.5 L12 17 L8 14.5 Z" fill="#3e93c4" stroke="#1c5f87" stroke-width="1"/><path d="M11 7 H14.5 V13 H11 Z" fill="#a9d3ea" stroke="#1c5f87" stroke-width=".8"/></svg><div class="ti" style="left:49.4px;top:456px;transform:scaleX(0.9157);">Split1</div><svg class="a" style="left:25.5px;top:475.0px" width="19" height="18" viewBox="0 0 19 18"><path d="M2 4 L5 2 H15 L12 4 Z" fill="#fff" stroke="#333" stroke-width="1"/><path d="M2 4 H12 V6 C7 6 6 10 6 16 H2 Z" fill="#f0f0f2" stroke="#333" stroke-width="1"/>
<path d="M6 16 C6 10 8 6.5 13 6.5 C16 6.5 17.5 8.5 17.5 11 V14 H14.5 V11.5 C14.5 10.3 13.8 9.7 12.8 9.7 C10 9.7 9.5 12 9.5 16 Z" fill="#3e93c4" stroke="#1c5f87" stroke-width="1"/></svg><div class="ti" style="left:49.4px;top:478px;transform:scaleX(0.9539);">Cut-Sweep1</div><svg class="a" style="left:25.5px;top:497.0px" width="19" height="18" viewBox="0 0 19 18"><path d="M2 5 L8 2 L15 4.5 V12 L9 16 L2 13 Z" fill="#3e93c4" stroke="#1c5f87" stroke-width="1" stroke-linejoin="round"/><path d="M2 5 L9 8 L15 4.5 M9 8 V16" stroke="#1c5f87" stroke-width="1" fill="none"/><path d="M2 5 L8 2 L15 4.5 L9 8 Z" fill="#7fc0e2" stroke="#1c5f87" stroke-width="1" stroke-linejoin="round"/>
<path d="M12.5 11.5 L17.5 16.5 M17.5 11.5 L12.5 16.5" stroke="#111" stroke-width="1.8"/></svg><div class="ti" style="left:49.4px;top:500px;transform:scaleX(0.9674);">Body-Delete/Keep 1</div><svg class="a" style="left:25.5px;top:519.0px" width="19" height="18" viewBox="0 0 19 18"><path d="M2 6.5 L7 2.5 H13 C16 2.5 17.5 4.5 17.5 7 V12 L12 16.5 H2 Z" fill="#f4f4f6" stroke="#333" stroke-width="1" stroke-linejoin="round"/>
<path d="M7 2.5 H13 C16 2.5 17.5 4.5 17.5 7 L12 11 C12 8 10.5 6.5 7.5 6.5 H2 Z" fill="#4a9fce" stroke="#333" stroke-width="1" stroke-linejoin="round"/>
<path d="M12 11 V16.5 L17.5 12 V7 Z" fill="#dcdcde" stroke="#333" stroke-width="1" stroke-linejoin="round"/></svg><div class="ti" style="left:49.4px;top:522px;transform:scaleX(0.9339);">Fillet1</div><div class="a" style="left:0;top:539px;width:226px;height:3px;background:#3b8fc0"></div><div class="a" style="left:0;top:805px;width:229px;height:16px;background:#f1f1f3"></div><div class="a" style="left:17px;top:806px;width:151px;height:14px;background:#cdcdcf"></div><svg class="a" style="left:4.5px;top:808.0px" width="8" height="10" viewBox="0 0 8 10"><path d="M6 1.5 L2.5 5 L6 8.5" stroke="#444" stroke-width="1.6" fill="none"/></svg><svg class="a" style="left:215.0px;top:808.0px" width="8" height="10" viewBox="0 0 8 10"><path d="M2 1.5 L5.5 5 L2 8.5" stroke="#444" stroke-width="1.6" fill="none"/></svg></div><div class="a" style="left:236px;top:30px;width:1px;height:826px;background:#8e8e90"></div><div class="a" style="left:236px;top:426px;width:8px;height:36px;background:#f4f4f6;border:1px solid #8e8e90;border-left:none"></div><div class="a" style="left:238px;top:441px;width:5px;height:5px;border-radius:3px;background:#bdbdbf;border:1px solid #9a9a9c"></div><div class="a" style="left:8px;top:857px;width:66px;height:14px;background:#b3b3b5"></div><div class="a" style="left:23px;top:857px;width:1px;height:14px;background:#9c9c9e"></div><svg class="a" style="left:9.0px;top:857.0px" width="14" height="14" viewBox="0 0 14 14"><path d="M9 3 L4 7 L9 11 Z M3 3 V11" fill="#a4a4a6" stroke="#a4a4a6" stroke-width="1"/></svg><div class="a" style="left:39px;top:857px;width:1px;height:14px;background:#9c9c9e"></div><svg class="a" style="left:25.0px;top:857.0px" width="14" height="14" viewBox="0 0 14 14"><path d="M10 3 L5 7 L10 11 Z" fill="#a4a4a6" stroke="#a4a4a6" stroke-width="1"/></svg><div class="a" style="left:55px;top:857px;width:1px;height:14px;background:#9c9c9e"></div><svg class="a" style="left:41.0px;top:857.0px" width="14" height="14" viewBox="0 0 14 14"><path d="M5 3 L10 7 L5 11 Z" fill="#a4a4a6" stroke="#a4a4a6" stroke-width="1"/></svg><div class="a" style="left:71px;top:857px;width:1px;height:14px;background:#9c9c9e"></div><svg class="a" style="left:57.0px;top:857.0px" width="14" height="14" viewBox="0 0 14 14"><path d="M5 3 L10 7 L5 11 Z M11 3 V11" fill="#a4a4a6" stroke="#a4a4a6" stroke-width="1"/></svg><div class="btab" style="left:74px;top:856px;width:57px;background:#fdfdfe;font-weight:bold;color:#111;height:16px;line-height:15px;text-align:left;padding-left:13px"><div style="display:inline-block;transform-origin:0 50%;transform:scaleX(0.9950);">Model</div></div><div class="btab" style="left:131px;top:857px;width:68px;background:#d9d9db;border-right:1px solid #9a9a9c;color:#222;text-align:left;padding-left:10.5px"><div style="display:inline-block;transform-origin:0 50%;transform:scaleX(0.9273);">3D Views</div></div><div class="btab" style="left:199px;top:857px;width:108px;background:#d9d9db;border-right:1px solid #9a9a9c;color:#222;text-align:left;padding-left:10px"><div style="display:inline-block;transform-origin:0 50%;transform:scaleX(0.9994);">Motion Study 1</div></div><div class="a" style="left:0;top:871px;width:960px;height:7px;background:linear-gradient(180deg,#b7cfe9 0%,#9fd0f2 100%)"></div></div>
<div class="win" style="left:960px;width:960px;background:#dbe7f3"><div class="a" style="left:0;top:0;width:960px;height:31px;background:linear-gradient(180deg,#cbd9e9 0%,#d3dfed 55%,#dfe9f3 100%)"></div><svg class="a" style="left:9.5px;top:9.5px" width="18" height="18" viewBox="0 0 18 18"><path d="M1.5 8.5 L4.5 6.5 L4.5 3.5 L8 1.5 L11.5 3 L11.5 6.5 L13.5 5.8 L16.5 8 L16.5 12.5 L10.5 16.5 L1.5 12 Z" fill="#f1bf17" stroke="#4f3d05" stroke-width="1.1" stroke-linejoin="round"/>
<path d="M4.5 3.5 L8 1.5 L11.5 3 L8 5.2 Z" fill="#fde98f" stroke="#4f3d05" stroke-width=".7" stroke-linejoin="round"/>
<path d="M1.5 8.5 L4.5 6.5 L8 8.5 L11.5 6.5 L13.5 5.8 L16.5 8 L10.5 12.5 Z" fill="#fbdc5e" stroke="#4f3d05" stroke-width=".7" stroke-linejoin="round"/>
<path d="M8 5.2 L8 8.5 M10.5 12.5 L10.5 16.5" stroke="#4f3d05" stroke-width=".7" fill="none"/>
<path d="M4.5 3.5 L8 5.2 L8 8.5 L4.5 6.5 Z" fill="#f1bf17" stroke="#4f3d05" stroke-width=".7" stroke-linejoin="round"/></svg><div class="t" style="left:29.6px;top:12px;transform:scaleX(0.8922);color:#9aa0a8;">Tennis Ball.SLDPRT</div><div class="wbtn" style="left:781px;border:1px solid #9fb0c2;background:linear-gradient(180deg,#dbe5f0 0%,#d0dcea 100%)"></div><svg class="a" style="left:791.0px;top:12.0px" width="12" height="12" viewBox="0 0 12 12"><rect x="1" y="1" width="10" height="10" rx="1" fill="#fff" stroke="#6f7c8b" stroke-width="1.2"/><path d="M6 3.5 L3.3 6 L6 8.5 Z" fill="#6f7c8b"/><path d="M8 3.2 V8.8" stroke="#6f7c8b" stroke-width="1.4"/></svg><div class="wbtn" style="left:815px;border:1px solid #9fb0c2;background:linear-gradient(180deg,#dbe5f0 0%,#d0dcea 100%)"></div><svg class="a" style="left:825.0px;top:12.0px" width="12" height="12" viewBox="0 0 12 12"><rect x="1" y="1" width="10" height="10" rx="1" fill="#fff" stroke="#6f7c8b" stroke-width="1.2"/><path d="M6 3.5 L8.7 6 L6 8.5 Z" fill="#6f7c8b"/><path d="M4 3.2 V8.8" stroke="#6f7c8b" stroke-width="1.4"/></svg><div class="wbtn" style="left:849px;border:1px solid #9fb0c2;background:linear-gradient(180deg,#dbe5f0 0%,#d0dcea 100%)"></div><svg class="a" style="left:859.0px;top:18.5px" width="12" height="5" viewBox="0 0 12 5"><rect x="1" y="1" width="10" height="3" rx=".8" fill="#fff" stroke="#6f7c8b" stroke-width="1"/></svg><div class="wbtn" style="left:883px;border:1px solid #9fb0c2;background:linear-gradient(180deg,#dbe5f0 0%,#d0dcea 100%)"></div><svg class="a" style="left:893.0px;top:13.0px" width="12" height="10" viewBox="0 0 12 10"><rect x="1" y="1" width="10" height="8" rx=".8" fill="#fff" stroke="#6f7c8b" stroke-width="1"/><rect x="4" y="3.5" width="4" height="3" fill="#d5e0ec" stroke="#6f7c8b" stroke-width="1"/></svg><div class="wbtn" style="left:917px;border:1px solid #9fb0c2;background:linear-gradient(180deg,#dbe5f0 0%,#d0dcea 100%)"></div><svg class="a" style="left:927.0px;top:13.0px" width="12" height="10" viewBox="0 0 12 10"><path d="M2 1.5 L6 4 L10 1.5 M2 8.5 L6 6 L10 8.5 M2 1.5 L10 8.5 M10 1.5 L2 8.5" stroke="#6f7c8b" stroke-width="3.2" stroke-linecap="round" fill="none"/><path d="M2 1.5 L10 8.5 M10 1.5 L2 8.5" stroke="#fff" stroke-width="1.9" stroke-linecap="round" fill="none"/></svg><div class="a" style="left:241px;top:30px;width:711px;height:826px;overflow:hidden;background:#fff"><svg class="a" style="left:0;top:0" width="711" height="826" viewBox="0 0 711 826">
<defs>
<linearGradient id="bgr" x1="0" y1="0" x2="0" y2="1">
 <stop offset="0" stop-color="#eef0f5"/><stop offset="0.12" stop-color="#e9ebf1"/><stop offset="0.32" stop-color="#e4e7ee"/><stop offset="0.58" stop-color="#e5e8ef"/><stop offset="0.72" stop-color="#f0f1f5"/><stop offset="0.84" stop-color="#fbfbfd"/><stop offset="1" stop-color="#ffffff"/>
</linearGradient>
<radialGradient id="whr" gradientUnits="userSpaceOnUse" cx="57" cy="0" r="555" gradientTransform="scale(1 0.62)">
 <stop offset="0" stop-color="#fff" stop-opacity="1"/><stop offset="0.35" stop-color="#fff" stop-opacity=".95"/><stop offset="0.7" stop-color="#fff" stop-opacity=".45"/><stop offset="1" stop-color="#fff" stop-opacity="0"/>
</radialGradient>
<linearGradient id="lwr" x1="0" y1="0" x2="1" y2="0"><stop offset="0" stop-color="#fff" stop-opacity=".3"/><stop offset="0.35" stop-color="#fff" stop-opacity=".15"/><stop offset="0.75" stop-color="#fff" stop-opacity="0"/></linearGradient>
<radialGradient id="ballr" cx="0.50" cy="0.25" r="0.82" fx="0.50" fy="0.20">
 <stop offset="0" stop-color="#a9be12"/><stop offset="0.25" stop-color="#a0b50e"/><stop offset="0.45" stop-color="#95a90b"/><stop offset="0.65" stop-color="#8b9e09"/><stop offset="0.84" stop-color="#809208"/><stop offset="1" stop-color="#6a7a05"/>
</radialGradient>
<radialGradient id="hlr" cx="0.5" cy="0.5" r="0.5"><stop offset="0" stop-color="#c9dc48" stop-opacity=".95"/><stop offset="1" stop-color="#c6d944" stop-opacity="0"/></radialGradient>
<radialGradient id="dkr" cx="0.5" cy="0.5" r="0.5"><stop offset="0" stop-color="#5d6c05" stop-opacity=".45"/><stop offset="1" stop-color="#5d6c05" stop-opacity="0"/></radialGradient>
<radialGradient id="rfr" gradientUnits="userSpaceOnUse" cx="338.5" cy="677.0" r="300" gradientTransform="translate(0 257.3) scale(1 0.62)"><stop offset="0" stop-color="#e6e8d4"/><stop offset="0.3" stop-color="#eeefe3"/><stop offset="0.6" stop-color="#f4f5ee"/><stop offset="1" stop-color="#fdfdfb"/></radialGradient>
<filter id="fzr" x="0" y="0" width="1" height="1" color-interpolation-filters="sRGB">
 <feTurbulence type="fractalNoise" baseFrequency="0.11 0.15" numOctaves="3" seed="7" result="n"/>
 <feColorMatrix in="n" type="matrix" values="0 0 0 0 0.33  0 0 0 0 0.38  0 0 0 0 0.0  0.9 0.9 0 0 -0.62"/>
</filter>
<filter id="fz2r" x="0" y="0" width="1" height="1" color-interpolation-filters="sRGB">
 <feTurbulence type="fractalNoise" baseFrequency="0.10 0.13" numOctaves="3" seed="16" result="n"/>
 <feColorMatrix in="n" type="matrix" values="0 0 0 0 0.78  0 0 0 0 0.86  0 0 0 0 0.20  -0.9 -0.9 0 0 1.12"/>
</filter>
<filter id="fz3r" x="0" y="0" width="1" height="1" color-interpolation-filters="sRGB">
 <feTurbulence type="fractalNoise" baseFrequency="0.02 0.026" numOctaves="2" seed="9" result="n"/>
 <feColorMatrix in="n" type="matrix" values="0 0 0 0 0.35  0 0 0 0 0.40  0 0 0 0 0.0  1.2 1.2 0 0 -0.95"/>
</filter>
<linearGradient id="dgr" gradientUnits="userSpaceOnUse" x1="123.5" y1="0" x2="458.5" y2="0"><stop offset="0" stop-color="#a0a0a3" stop-opacity="1"/><stop offset="0.45" stop-color="#a0a0a3" stop-opacity=".85"/><stop offset="0.8" stop-color="#a0a0a3" stop-opacity=".35"/><stop offset="1" stop-color="#a0a0a3" stop-opacity=".25"/></linearGradient>
<clipPath id="cpr"><circle cx="338.5" cy="412.5" r="274.5"/></clipPath>
<clipPath id="smr"><path d="M202.0 170.0 C200.2 172.4 196.2 179.3 190.9 184.5 C185.6 189.7 176.6 195.0 170.4 201.4 C164.2 207.8 158.1 215.5 153.5 223.1 C148.9 230.7 145.0 239.2 142.6 247.2 C140.2 255.2 138.4 263.3 139.0 271.4 C139.6 279.4 141.8 287.1 146.2 295.5 C150.6 303.9 156.7 313.2 165.5 322.0 C174.3 330.8 186.4 340.9 199.3 348.5 C212.2 356.1 227.4 362.8 242.7 367.8 C258.0 372.8 274.9 376.4 291.0 378.7 C307.1 381.0 328.0 381.2 339.2 381.5 C350.4 381.8 349.1 381.6 358.0 380.8 C366.9 380.0 380.6 378.8 392.7 376.5 C404.9 374.2 418.8 370.9 430.9 367.0 C443.1 363.1 454.6 358.0 465.6 353.1 C476.6 348.2 487.4 341.0 496.9 337.4 C506.5 333.8 514.2 332.4 522.9 331.4 C531.6 330.4 540.9 330.1 549.0 331.4 C557.1 332.7 564.9 335.3 571.5 339.2 C578.1 343.1 584.0 349.0 588.9 354.8 C593.8 360.6 597.5 366.9 601.0 373.9 C604.5 380.8 607.2 389.1 609.7 396.5 C612.2 403.9 615.0 414.4 616.0 418.0 L620.0 384.0 C618.0 380.3 611.2 368.4 608.0 361.8 C604.8 355.2 604.2 350.2 601.0 344.4 C597.8 338.6 593.8 332.2 588.9 327.0 C584.0 321.8 578.1 316.7 571.5 313.1 C564.9 309.5 557.1 306.9 549.0 305.3 C540.9 303.7 531.6 303.3 522.9 303.6 C514.2 303.9 505.6 305.1 496.9 307.1 C488.2 309.1 480.9 311.5 470.8 315.7 C460.7 319.9 447.7 327.4 436.1 332.2 C424.5 337.0 414.4 341.1 401.4 344.4 C388.4 347.7 372.4 351.1 358.0 352.2 C343.6 353.3 330.3 352.8 315.1 351.0 C299.9 349.2 281.3 345.3 266.8 341.3 C252.3 337.3 240.3 332.8 228.2 326.8 C216.2 320.8 203.7 312.3 194.5 305.1 C185.3 297.9 178.2 290.6 172.8 283.4 C167.4 276.2 164.1 268.5 161.9 261.7 C159.7 254.9 159.3 249.2 159.5 242.4 C159.7 235.6 160.5 227.7 163.1 220.7 C165.7 213.7 170.3 206.1 175.2 200.2 C180.1 194.3 187.4 190.2 192.5 185.5 C197.6 180.8 203.8 174.2 206.0 172.0 Z"/></clipPath>
<filter id="blr" x="-.1" y="-.1" width="1.2" height="1.2"><feGaussianBlur stdDeviation="2.2"/></filter>
<filter id="bsr" x="-.1" y="-.1" width="1.2" height="1.2"><feGaussianBlur stdDeviation="0.7"/></filter>
</defs>
<rect width="711" height="826" fill="url(#bgr)"/>
<rect width="711" height="826" fill="url(#whr)"/>
<rect width="711" height="826" fill="url(#lwr)"/>
<ellipse cx="338.5" cy="828" rx="266" ry="230" fill="url(#rfr)"/>
<g clip-path="url(#cpr)">
<circle cx="338.5" cy="412.5" r="274.5" fill="url(#ballr)"/>
<ellipse cx="188.5" cy="562.5" rx="190" ry="170" fill="url(#dkr)"/>
<ellipse cx="74.0" cy="452.5" rx="170" ry="330" fill="url(#dkr)" opacity=".9"/>
<ellipse cx="348.5" cy="697.0" rx="300" ry="125" fill="url(#dkr)"/>
<ellipse cx="503.5" cy="472.5" rx="130" ry="170" fill="url(#hlr)" opacity=".32"/>
<ellipse cx="223.5" cy="244.5" rx="78" ry="36" fill="url(#hlr)" transform="rotate(-28 223.5 244.5)"/>
<ellipse cx="398.5" cy="212.5" rx="85" ry="36" fill="url(#hlr)" transform="rotate(8 398.5 212.5)"/>
<ellipse cx="428.5" cy="397.5" rx="75" ry="20" fill="url(#hlr)" opacity=".55" transform="rotate(-12 428.5 397.5)"/>
<rect x="64.0" y="138.0" width="549.0" height="549.0" filter="url(#fz3r)" opacity=".20"/>
<rect x="64.0" y="138.0" width="549.0" height="549.0" filter="url(#fzr)" opacity=".35"/>
<rect x="64.0" y="138.0" width="549.0" height="549.0" filter="url(#fz2r)" opacity=".20"/>
<path d="M228.0 658.0 C236.3 660.8 259.2 670.2 278.0 674.5 C296.8 678.8 320.2 683.2 341.0 683.5 C361.8 683.8 382.2 681.1 403.0 676.5 C423.8 671.9 455.5 659.4 466.0 656.0 L466.0 656.0 C455.5 658.6 423.8 667.8 403.0 671.5 C382.2 675.2 361.8 678.3 341.0 678.0 C320.2 677.7 296.8 672.8 278.0 669.5 C259.2 666.2 236.3 659.9 228.0 658.0 Z" fill="#b4b4b6" filter="url(#bsr)"/>
<g filter="url(#bsr)"><path d="M202.0 170.0 C200.2 172.4 196.2 179.3 190.9 184.5 C185.6 189.7 176.6 195.0 170.4 201.4 C164.2 207.8 158.1 215.5 153.5 223.1 C148.9 230.7 145.0 239.2 142.6 247.2 C140.2 255.2 138.4 263.3 139.0 271.4 C139.6 279.4 141.8 287.1 146.2 295.5 C150.6 303.9 156.7 313.2 165.5 322.0 C174.3 330.8 186.4 340.9 199.3 348.5 C212.2 356.1 227.4 362.8 242.7 367.8 C258.0 372.8 274.9 376.4 291.0 378.7 C307.1 381.0 328.0 381.2 339.2 381.5 C350.4 381.8 349.1 381.6 358.0 380.8 C366.9 380.0 380.6 378.8 392.7 376.5 C404.9 374.2 418.8 370.9 430.9 367.0 C443.1 363.1 454.6 358.0 465.6 353.1 C476.6 348.2 487.4 341.0 496.9 337.4 C506.5 333.8 514.2 332.4 522.9 331.4 C531.6 330.4 540.9 330.1 549.0 331.4 C557.1 332.7 564.9 335.3 571.5 339.2 C578.1 343.1 584.0 349.0 588.9 354.8 C593.8 360.6 597.5 366.9 601.0 373.9 C604.5 380.8 607.2 389.1 609.7 396.5 C612.2 403.9 615.0 414.4 616.0 418.0 L620.0 384.0 C618.0 380.3 611.2 368.4 608.0 361.8 C604.8 355.2 604.2 350.2 601.0 344.4 C597.8 338.6 593.8 332.2 588.9 327.0 C584.0 321.8 578.1 316.7 571.5 313.1 C564.9 309.5 557.1 306.9 549.0 305.3 C540.9 303.7 531.6 303.3 522.9 303.6 C514.2 303.9 505.6 305.1 496.9 307.1 C488.2 309.1 480.9 311.5 470.8 315.7 C460.7 319.9 447.7 327.4 436.1 332.2 C424.5 337.0 414.4 341.1 401.4 344.4 C388.4 347.7 372.4 351.1 358.0 352.2 C343.6 353.3 330.3 352.8 315.1 351.0 C299.9 349.2 281.3 345.3 266.8 341.3 C252.3 337.3 240.3 332.8 228.2 326.8 C216.2 320.8 203.7 312.3 194.5 305.1 C185.3 297.9 178.2 290.6 172.8 283.4 C167.4 276.2 164.1 268.5 161.9 261.7 C159.7 254.9 159.3 249.2 159.5 242.4 C159.7 235.6 160.5 227.7 163.1 220.7 C165.7 213.7 170.3 206.1 175.2 200.2 C180.1 194.3 187.4 190.2 192.5 185.5 C197.6 180.8 203.8 174.2 206.0 172.0 Z" fill="#b4b4b6"/></g>
<g clip-path="url(#smr)">
 <path d="M205.1 171.6 C203.3 173.6 197.9 179.9 193.9 183.6 C189.9 187.4 185.1 190.3 181.1 194.0 C177.1 197.7 173.1 201.6 169.8 205.9 C166.5 210.3 163.6 215.2 161.5 220.1 C159.4 225.1 157.9 230.5 156.9 235.8 C155.9 241.2 155.3 246.7 155.6 252.1 C155.8 257.5 156.8 263.0 158.4 268.1 C160.0 273.3 162.4 278.4 165.2 283.0 C167.9 287.7 171.5 292.0 175.1 296.1 C178.7 300.2 182.7 304.0 186.8 307.6 C191.0 311.2 195.4 314.5 199.8 317.7 C204.3 320.9 208.8 324.0 213.6 326.8 C218.3 329.6 223.1 332.2 228.1 334.6 C233.0 337.0 238.1 339.1 243.3 341.0 C248.4 343.0 253.6 344.7 258.9 346.3 C264.2 347.9 269.5 349.3 274.8 350.6 C280.2 351.9 285.5 353.0 290.9 354.1 C296.3 355.1 301.8 356.0 307.2 356.7 C312.7 357.5 318.2 358.1 323.6 358.4 C329.1 358.8 334.6 359.0 340.1 359.0 C345.6 359.0 351.1 358.8 356.6 358.4 C362.1 358.0 367.5 357.3 373.0 356.5 C378.4 355.7 383.8 354.7 389.2 353.6 C394.6 352.5 399.9 351.3 405.2 349.8 C410.5 348.4 415.8 346.7 421.0 344.9 C426.1 343.1 431.3 341.2 436.4 339.1 C441.5 337.0 446.4 334.7 451.4 332.4 C456.4 330.1 461.3 327.6 466.4 325.4 C471.4 323.2 476.5 321.0 481.6 319.1 C486.8 317.2 491.9 315.4 497.2 314.0 C502.5 312.6 507.9 311.4 513.3 310.7 C518.7 310.0 524.3 309.6 529.8 309.6 C535.2 309.6 540.8 309.8 546.2 310.6 C551.6 311.5 557.1 312.7 562.2 314.6 C567.3 316.6 572.3 319.1 576.8 322.2 C581.3 325.3 585.4 329.1 589.0 333.2 C592.6 337.3 595.9 341.9 598.6 346.6 C601.3 351.3 603.1 356.6 605.4 361.6 C607.6 366.6 609.7 371.7 611.9 376.7 C614.2 381.7 617.9 389.0 619.1 391.5" fill="none" stroke="url(#dgr)" stroke-width="7" filter="url(#blr)"/>
 <path d="M203.8 170.9 C202.0 173.0 196.9 179.9 192.8 183.8 C188.8 187.7 183.8 190.7 179.6 194.5 C175.5 198.3 171.3 202.2 167.8 206.5 C164.3 210.9 161.1 215.7 158.5 220.7 C156.0 225.7 154.0 231.0 152.4 236.4 C150.9 241.7 149.7 247.3 149.3 252.9 C149.0 258.4 149.1 264.1 150.2 269.5 C151.3 274.9 153.3 280.3 155.8 285.3 C158.2 290.3 161.5 295.0 165.0 299.5 C168.4 303.9 172.2 308.1 176.2 312.0 C180.3 316.0 184.6 319.6 189.1 323.1 C193.5 326.5 198.1 329.9 202.9 332.9 C207.6 336.0 212.5 338.8 217.5 341.4 C222.6 344.0 227.7 346.3 233.0 348.5 C238.2 350.6 243.5 352.5 248.9 354.3 C254.3 356.1 259.7 357.7 265.2 359.1 C270.7 360.5 276.2 361.8 281.7 362.9 C287.3 364.0 292.9 365.0 298.5 365.8 C304.1 366.5 309.7 367.2 315.4 367.6 C321.0 368.0 326.7 368.2 332.3 368.3 C338.0 368.4 343.7 368.4 349.3 368.2 C354.9 367.9 360.6 367.5 366.2 366.8 C371.8 366.2 377.4 365.3 383.0 364.4 C388.5 363.5 394.1 362.4 399.6 361.2 C405.1 359.9 410.6 358.4 416.0 356.8 C421.4 355.2 426.8 353.4 432.1 351.5 C437.4 349.6 442.6 347.4 447.8 345.2 C453.0 343.0 458.2 340.6 463.3 338.3 C468.5 336.0 473.7 333.7 478.9 331.5 C484.1 329.3 489.2 326.8 494.5 325.0 C499.8 323.2 505.2 321.7 510.8 320.6 C516.3 319.6 522.0 319.0 527.6 318.8 C533.2 318.5 539.0 318.5 544.5 319.1 C550.1 319.8 555.8 320.9 561.1 322.8 C566.3 324.7 571.6 327.3 576.2 330.4 C580.8 333.6 584.9 337.7 588.6 341.9 C592.3 346.2 595.6 350.9 598.4 355.8 C601.2 360.7 603.2 366.0 605.4 371.2 C607.6 376.4 609.5 381.8 611.6 387.0 C613.7 392.2 616.8 400.1 617.8 402.7" fill="none" stroke="#c6c6c8" stroke-opacity=".75" stroke-width="4" filter="url(#blr)"/>
 <path d="M204.1 171.0 C202.2 173.2 197.1 179.9 193.1 183.8 C189.0 187.6 184.1 190.6 179.9 194.4 C175.8 198.2 171.7 202.0 168.2 206.4 C164.7 210.8 161.6 215.6 159.2 220.6 C156.7 225.6 154.8 230.9 153.4 236.3 C152.0 241.6 150.9 247.2 150.7 252.7 C150.4 258.2 150.8 263.8 151.9 269.2 C153.1 274.5 155.2 279.9 157.8 284.8 C160.3 289.8 163.6 294.4 167.1 298.7 C170.6 303.1 174.4 307.2 178.5 311.1 C182.5 314.9 186.9 318.5 191.4 321.9 C195.8 325.4 200.4 328.6 205.1 331.6 C209.9 334.7 214.8 337.4 219.8 340.0 C224.8 342.5 230.0 344.8 235.2 346.9 C240.4 349.0 245.7 350.9 251.0 352.6 C256.4 354.3 261.8 355.9 267.2 357.3 C272.7 358.7 278.2 359.9 283.7 361.0 C289.2 362.1 294.8 363.1 300.3 363.8 C305.9 364.6 311.5 365.2 317.1 365.6 C322.7 366.1 328.4 366.2 334.0 366.3 C339.6 366.4 345.2 366.4 350.8 366.1 C356.5 365.8 362.1 365.3 367.6 364.6 C373.2 364.0 378.8 363.1 384.3 362.1 C389.8 361.1 395.4 360.1 400.8 358.8 C406.3 357.5 411.7 355.9 417.0 354.3 C422.4 352.6 427.7 350.8 433.0 348.9 C438.3 346.9 443.4 344.7 448.6 342.5 C453.8 340.3 458.8 337.8 464.0 335.6 C469.1 333.3 474.3 331.0 479.5 328.9 C484.6 326.7 489.7 324.4 495.1 322.7 C500.4 321.0 505.8 319.5 511.3 318.5 C516.8 317.5 522.5 317.0 528.1 316.8 C533.7 316.6 539.3 316.6 544.9 317.3 C550.4 318.0 556.1 319.2 561.3 321.1 C566.5 323.0 571.7 325.5 576.3 328.7 C580.9 331.9 585.0 335.9 588.7 340.1 C592.4 344.3 595.6 349.0 598.4 353.8 C601.2 358.7 603.2 364.0 605.4 369.2 C607.6 374.4 609.6 379.6 611.7 384.8 C613.8 390.0 617.0 397.7 618.1 400.3" fill="none" stroke="url(#dgr)" stroke-opacity=".8" stroke-width="1.3" filter="url(#bsr)"/>
</g>
</g>
</svg><svg class="a" style="left:10px;top:733px" width="60" height="52" viewBox="0 0 60 52"><path d="M30 36 L30 14" stroke="#35b03a" stroke-width="2.4"/><path d="M30 7 L26.8 15 H33.2 Z" fill="#1f8a25"/>
<path d="M30 36 L48 44.5" stroke="#c4282a" stroke-width="2.6"/><path d="M54 47.5 L45 47.5 L48 41 Z" fill="#c4282a"/>
<path d="M30 36 L13 44.5" stroke="#1f2fc0" stroke-width="2.6"/><path d="M6 47.5 L15 47.5 L12 41 Z" fill="#1f2fc0"/>
<text x="30" y="5" font-family="Liberation Sans" font-size="6.5" font-weight="bold" fill="#2b8a30" text-anchor="middle">Y</text>
<text x="57.5" y="50" font-family="Liberation Sans" font-size="6.5" font-weight="bold" fill="#e05a5a" text-anchor="middle">X</text>
<text x="2.5" y="50" font-family="Liberation Sans" font-size="6.5" font-weight="bold" fill="#4a55d0" text-anchor="middle">Z</text></svg><div class="t" style="left:10.799999999999955px;top:809px;transform:scaleX(1.0211);font-weight:bold;font-size:13px;color:#111;">*Isometric</div></div><div class="a" style="left:8px;top:856px;width:943px;height:15px;background:#fbfbfd;border-top:1px solid #77777a"></div><div class="tree" style="left:8px;top:30px;width:233px;height:826px"><div class="a" style="left:0;top:0;width:233px;height:5px;background:linear-gradient(180deg,#c9c9cb 0%,#efeff1 100%)"></div><div class="a" style="left:0;top:20px;width:233px;height:2px;background:#dededf"></div><div class="a" style="left:109.5px;top:10.5px;width:5px;height:5px;border-radius:3px;background:#b9b9bb;border:1px solid #9a9a9c"></div><div class="a" style="left:0;top:50px;width:233px;height:1px;background:#c8c8ca"></div><div class="ptab" style="left:40px;top:25px;border-left:1px solid #a9a9ab;width:41px"></div><div class="ptab" style="left:81px;top:25px;width:40px"></div><div class="ptab" style="left:121px;top:25px;width:40px"></div><div class="ptab" style="left:161px;top:25px;width:40px"></div><svg class="a" style="left:12.0px;top:28.5px" width="20" height="20" viewBox="0 0 18 18"><path d="M1.5 8.5 L4.5 6.5 L4.5 3.5 L8 1.5 L11.5 3 L11.5 6.5 L13.5 5.8 L16.5 8 L16.5 12.5 L10.5 16.5 L1.5 12 Z" fill="#f1bf17" stroke="#4f3d05" stroke-width="1.1" stroke-linejoin="round"/>
<path d="M4.5 3.5 L8 1.5 L11.5 3 L8 5.2 Z" fill="#fde98f" stroke="#4f3d05" stroke-width=".7" stroke-linejoin="round"/>
<path d="M1.5 8.5 L4.5 6.5 L8 8.5 L11.5 6.5 L13.5 5.8 L16.5 8 L10.5 12.5 Z" fill="#fbdc5e" stroke="#4f3d05" stroke-width=".7" stroke-linejoin="round"/>
<path d="M8 5.2 L8 8.5 M10.5 12.5 L10.5 16.5" stroke="#4f3d05" stroke-width=".7" fill="none"/>
<path d="M4.5 3.5 L8 5.2 L8 8.5 L4.5 6.5 Z" fill="#f1bf17" stroke="#4f3d05" stroke-width=".7" stroke-linejoin="round"/></svg><svg class="a" style="left:52.0px;top:29.0px" width="18" height="18" viewBox="0 0 18 18"><rect x="1" y="1" width="16" height="16" rx="1" fill="#fdfdfd" stroke="#1c5f87" stroke-width="1.3"/><rect x="1" y="1" width="16" height="3" fill="#3e93c4"/><rect x="3" y="6.3" width="3.6" height="2.4" fill="#3e93c4" stroke="#1c5f87" stroke-width=".6"/><rect x="3" y="10" width="3.6" height="2.4" fill="#3e93c4" stroke="#1c5f87" stroke-width=".6"/><rect x="3" y="13.6" width="3.6" height="2.1" fill="#3e93c4" stroke="#1c5f87" stroke-width=".6"/><path d="M8.3 7.5 H15 M8.3 11.2 H15 M8.3 14.7 H15" stroke="#333" stroke-width="1.1"/></svg><svg class="a" style="left:93.0px;top:29.0px" width="16" height="18" viewBox="0 0 16 18"><path d="M4.5 1 V15 H10 M4.5 8 H9" fill="none" stroke="#333" stroke-width="1.2"/><rect x="2.3" y="1" width="4.4" height="3.8" fill="#fdfdfd" stroke="#333" stroke-width="1.1"/><rect x="8.5" y="2" width="5" height="4.4" rx="1" fill="#fdfdfd" stroke="#333" stroke-width="1.1"/><rect x="8.8" y="6.2" width="4.4" height="3.8" fill="#fdfdfd" stroke="#333" stroke-width="1.1"/><rect x="9.8" y="12.6" width="4.6" height="4.4" rx="1" fill="#fdfdfd" stroke="#333" stroke-width="1.1"/></svg><svg class="a" style="left:131.0px;top:28.0px" width="20" height="20" viewBox="0 0 20 20"><circle cx="10" cy="10" r="5.6" fill="none" stroke="#111" stroke-width="1.7"/><path d="M10 1 V19 M1 10 H19" stroke="#111" stroke-width="1.7"/></svg><svg class="a" style="left:171.0px;top:28.0px" width="20" height="20" viewBox="0 0 20 20"><circle cx="10" cy="10" r="8.6" fill="#f2f2f2" stroke="#666" stroke-width=".8"/><path d="M10 10 L10 1.4 A8.6 8.6 0 0 0 1.8 7.5 Z" fill="#3d7fd9"/><path d="M10 10 L1.8 7.5 A8.6 8.6 0 0 0 6.5 17.9 Z" fill="#41b649"/><path d="M10 10 L6.5 17.9 A8.6 8.6 0 0 0 17.7 13.8 Z" fill="#f3c21c"/><path d="M10 10 L17.7 13.8 A8.6 8.6 0 0 0 18.4 8 Z" fill="#e03a2a"/><path d="M10 10 L18.4 8 A8.6 8.6 0 0 0 10 1.4 Z" fill="#e03a2a"/><path d="M10.5 2.2 C14 2.5 17 5 17.6 8.6 C15 10 11 6 10.5 2.2 Z" fill="#1a1a1a"/></svg><svg class="a" style="left:214.0px;top:30.0px" width="10" height="14" viewBox="0 0 10 14"><path d="M3 2 L8 7 L3 12" stroke="#222" stroke-width="1.8" fill="none"/></svg><div class="a" style="left:4px;top:52px;width:224px;height:24px;border:1px solid #d6d6d8;background:#f9f9fb"></div><svg class="a" style="left:6.0px;top:55.0px" width="18" height="20" viewBox="0 0 18 20"><path d="M1.2 3.5 H16.8 L10.5 11 V17 L7.5 18.8 V11 Z" fill="#fdfdfd" stroke="#333" stroke-width="1.2" stroke-linejoin="round"/><path d="M0.8 2.2 H17.2" stroke="#2e84b4" stroke-width="2.6"/></svg><svg class="a" style="left:3.0px;top:78.5px" width="20" height="20" viewBox="0 0 18 18"><path d="M1.5 8.5 L4.5 6.5 L4.5 3.5 L8 1.5 L11.5 3 L11.5 6.5 L13.5 5.8 L16.5 8 L16.5 12.5 L10.5 16.5 L1.5 12 Z" fill="#f1bf17" stroke="#4f3d05" stroke-width="1.1" stroke-linejoin="round"/>
<path d="M4.5 3.5 L8 1.5 L11.5 3 L8 5.2 Z" fill="#fde98f" stroke="#4f3d05" stroke-width=".7" stroke-linejoin="round"/>
<path d="M1.5 8.5 L4.5 6.5 L8 8.5 L11.5 6.5 L13.5 5.8 L16.5 8 L10.5 12.5 Z" fill="#fbdc5e" stroke="#4f3d05" stroke-width=".7" stroke-linejoin="round"/>
<path d="M8 5.2 L8 8.5 M10.5 12.5 L10.5 16.5" stroke="#4f3d05" stroke-width=".7" fill="none"/>
<path d="M4.5 3.5 L8 5.2 L8 8.5 L4.5 6.5 Z" fill="#f1bf17" stroke="#4f3d05" stroke-width=".7" stroke-linejoin="round"/></svg><div class="ti" style="left:26.700000000000003px;top:82px;transform:scaleX(0.9772);">Tennis Ball (Default) &lt;&lt;Default&gt;_Displa</div><div class="arr" style="left:8px;top:106px"></div><svg class="a" style="left:25.5px;top:101.0px" width="19" height="18" viewBox="0 0 19 18"><path d="M1.5 16.5 V2.5 H7 L8.5 4.5 H14.5 V6" fill="#f4f4f6" stroke="#3a3a3c" stroke-width="1"/>
<rect x="2.5" y="6.5" width="15" height="10" rx="1" fill="#f0f0f2" stroke="#3a3a3c" stroke-width="1"/><circle cx="10.5" cy="11.5" r="3.4" fill="#fff" stroke="#2a79ab" stroke-width="1.3"/><path d="M10.5 9.6 V11.7 H12.3" stroke="#333" stroke-width="1" fill="none"/><path d="M5.5 12 l1.8 2 l1.5 -2.3" stroke="#2a79ab" stroke-width="1.2" fill="none"/></svg><div class="ti" style="left:49.4px;top:104px;transform:scaleX(0.9988);">History</div><svg class="a" style="left:25.5px;top:123.0px" width="19" height="18" viewBox="0 0 19 18"><path d="M1.5 16.5 V2.5 H7 L8.5 4.5 H14.5 V6" fill="#f4f4f6" stroke="#3a3a3c" stroke-width="1"/>
<rect x="2.5" y="6.5" width="15" height="10" rx="1" fill="#f0f0f2" stroke="#3a3a3c" stroke-width="1"/><circle cx="10.3" cy="11.6" r="3.6" fill="#fff" stroke="#2a79ab" stroke-width="1.2"/><path d="M10.3 11.6 L12.6 9.2" stroke="#333" stroke-width="1.2"/><path d="M8 14.3 A3.6 3.6 0 0 0 13 14" stroke="#d0401d" stroke-width="1.6" fill="none"/></svg><div class="ti" style="left:49.4px;top:126px;transform:scaleX(0.8903);">Sensors</div><div class="arr" style="left:8px;top:150px"></div><svg class="a" style="left:25.5px;top:145.0px" width="19" height="18" viewBox="0 0 19 18"><path d="M1.5 16.5 V2.5 H7 L8.5 4.5 H14.5 V6" fill="#f4f4f6" stroke="#3a3a3c" stroke-width="1"/>
<rect x="2.5" y="6.5" width="15" height="10" rx="1" fill="#f0f0f2" stroke="#3a3a3c" stroke-width="1"/><text x="10.2" y="15.6" font-family="Liberation Serif" font-size="11" font-weight="bold" fill="#2a79ab" text-anchor="middle">A</text></svg><div class="ti" style="left:49.4px;top:148px;transform:scaleX(1.0128);">Annotations</div><div class="arr" style="left:8px;top:172px"></div><svg class="a" style="left:25.5px;top:167.0px" width="19" height="18" viewBox="0 0 19 18"><path d="M1.5 16.5 V2.5 H7 L8.5 4.5 H14.5 V6" fill="#f4f4f6" stroke="#3a3a3c" stroke-width="1"/>
<rect x="2.5" y="6.5" width="15" height="10" rx="1" fill="#f0f0f2" stroke="#3a3a3c" stroke-width="1"/><path d="M7.5 9.5 L10.5 8.3 L13.5 9.5 V13.5 L10.5 15 L7.5 13.5 Z" fill="#3e93c4" stroke="#134d70" stroke-width=".9"/><path d="M7.5 9.5 L10.5 10.8 L13.5 9.5 M10.5 10.8 V15" stroke="#134d70" stroke-width=".8" fill="none"/></svg><div class="ti" style="left:49.4px;top:170px;transform:scaleX(0.9462);">Solid Bodies(1)</div><svg class="a" style="left:25.5px;top:188.5px" width="19" height="19" viewBox="0 0 19 19"><circle cx="3" cy="3.2" r="1.8" fill="#f4f4f4" stroke="#555" stroke-width=".9"/><circle cx="3" cy="9" r="1.8" fill="#3e93c4" stroke="#1c5f87" stroke-width=".9"/><circle cx="3" cy="15" r="1.8" fill="#f2c31b" stroke="#8a6a00" stroke-width=".9"/>
<path d="M6.5 3.2 H18 M6.5 9 H18 M6.5 15 H11" stroke="#333" stroke-width="1.5"/>
<circle cx="15.3" cy="15.3" r="2.6" fill="#222"/><circle cx="15.3" cy="15.3" r="3.6" fill="none" stroke="#222" stroke-width="1.6" stroke-dasharray="1.5 1.33"/><circle cx="15.3" cy="15.3" r="1" fill="#f7f7f9"/></svg><div class="ti" style="left:49.4px;top:192px;transform:scaleX(1.0039);">Material &lt;not specified&gt;</div><svg class="a" style="left:26.5px;top:210.5px" width="16" height="19" viewBox="0 0 16 19"><path d="M1.5 4.5 L14 2 V14.5 L1.5 17 Z" fill="#fbfbfd" stroke="#3a3a3c" stroke-width="1" stroke-linejoin="round"/>
<path d="M7.7 0.3 V3 M7.7 5 V8 M7.7 10 V13 M7.7 15.2 V18.7" stroke="#3a3a3c" stroke-width="1.1"/></svg><div class="ti" style="left:49.4px;top:214px;transform:scaleX(0.9590);">Front Plane</div><svg class="a" style="left:26.5px;top:232.5px" width="16" height="19" viewBox="0 0 16 19"><path d="M1.5 4.5 L14 2 V14.5 L1.5 17 Z" fill="#fbfbfd" stroke="#3a3a3c" stroke-width="1" stroke-linejoin="round"/>
<path d="M7.7 0.3 V3 M7.7 5 V8 M7.7 10 V13 M7.7 15.2 V18.7" stroke="#3a3a3c" stroke-width="1.1"/></svg><div class="ti" style="left:49.4px;top:236px;transform:scaleX(0.9630);">Top Plane</div><svg class="a" style="left:26.5px;top:254.5px" width="16" height="19" viewBox="0 0 16 19"><path d="M1.5 4.5 L14 2 V14.5 L1.5 17 Z" fill="#fbfbfd" stroke="#3a3a3c" stroke-width="1" stroke-linejoin="round"/>
<path d="M7.7 0.3 V3 M7.7 5 V8 M7.7 10 V13 M7.7 15.2 V18.7" stroke="#3a3a3c" stroke-width="1.1"/></svg><div class="ti" style="left:49.4px;top:258px;transform:scaleX(0.9590);">Right Plane</div><svg class="a" style="left:25.5px;top:277.0px" width="19" height="18" viewBox="0 0 19 18"><path d="M4.5 1.5 V14.5 H17" stroke="#222" stroke-width="1.4" fill="none"/><path d="M4.5 0 L2 4 H7 Z M18.5 14.5 L14.5 12 V17 Z" fill="#222"/></svg><div class="ti" style="left:49.4px;top:280px;transform:scaleX(1.0058);">Origin</div><div class="arr" style="left:8px;top:304px"></div><svg class="a" style="left:25.5px;top:299.0px" width="19" height="18" viewBox="0 0 19 18"><path d="M3 7 C3 2 15 1 16.5 7 C17.5 13 11 17.5 5 16.5 C2 16 1.5 12.5 4 12 C7 11.5 9.5 12 11 9.5 C11.5 8 9 7.5 8 8.5 Z" fill="#3e93c4" stroke="#1c5f87" stroke-width="1"/>
<path d="M6 6 C8 4 12 4 13.5 6" stroke="#a9d3ea" stroke-width="1.2" fill="none"/><path d="M5 9 L14 11" stroke="#0e3a57" stroke-width="1"/></svg><div class="ti" style="left:49.4px;top:302px;transform:scaleX(0.9094);">Revolve1</div><svg class="a" style="left:25.5px;top:321.0px" width="19" height="18" viewBox="0 0 19 18"><path d="M2 5 L7 2.5 L12 5 L7 8 Z" fill="#fff" stroke="#333" stroke-width="1"/><path d="M2 5 V8 L7 11 V8" fill="#eee" stroke="#333" stroke-width="1"/>
<path d="M9 11 L13.5 9 L18 11 L13.5 13.5 Z M9 11 V14 L13.5 16.5 L18 14 V11 M13.5 13.5 V16.5" fill="#3e93c4" stroke="#1c5f87" stroke-width="1"/>
<path d="M13 2 L17 5 L14.5 5.5 M4 12 L3 16.5 L7.5 15.5 M3.5 16 L8 11.5" stroke="#222" stroke-width="1.3" fill="none"/></svg><div class="ti" style="left:49.4px;top:324px;transform:scaleX(1.0120);">Body-Move/Copy1</div><svg class="a" style="left:25.5px;top:343.0px" width="19" height="18" viewBox="0 0 19 18"><path d="M18 1.5 H1.5 V12 Q1.5 16.5 7 16.5 H18" fill="#fdfdfd" stroke="#444" stroke-width="1"/></svg><div class="ti" style="left:49.4px;top:346px;transform:scaleX(0.9317);">Sketch2</div><svg class="a" style="left:26.5px;top:364.5px" width="16" height="19" viewBox="0 0 16 19"><path d="M1.5 4.5 L14 2 V14.5 L1.5 17 Z" fill="#fbfbfd" stroke="#3a3a3c" stroke-width="1" stroke-linejoin="round"/>
<path d="M7.7 0.3 V3 M7.7 5 V8 M7.7 10 V13 M7.7 15.2 V18.7" stroke="#3a3a3c" stroke-width="1.1"/></svg><div class="ti" style="left:49.4px;top:368px;transform:scaleX(0.9518);">Upper Plane</div><svg class="a" style="left:26.5px;top:386.5px" width="16" height="19" viewBox="0 0 16 19"><path d="M1.5 4.5 L14 2 V14.5 L1.5 17 Z" fill="#fbfbfd" stroke="#3a3a3c" stroke-width="1" stroke-linejoin="round"/>
<path d="M7.7 0.3 V3 M7.7 5 V8 M7.7 10 V13 M7.7 15.2 V18.7" stroke="#3a3a3c" stroke-width="1.1"/></svg><div class="ti" style="left:49.4px;top:390px;transform:scaleX(0.9518);">Lower Plane</div><svg class="a" style="left:26.5px;top:408.5px" width="16" height="19" viewBox="0 0 16 19"><path d="M1.5 4.5 L14 2 V14.5 L1.5 17 Z" fill="#fbfbfd" stroke="#3a3a3c" stroke-width="1" stroke-linejoin="round"/>
<path d="M7.7 0.3 V3 M7.7 5 V8 M7.7 10 V13 M7.7 15.2 V18.7" stroke="#3a3a3c" stroke-width="1.1"/></svg><div class="ti" style="left:49.4px;top:412px;transform:scaleX(0.9728);">Right Hand Plane</div><svg class="a" style="left:26.5px;top:430.5px" width="16" height="19" viewBox="0 0 16 19"><path d="M1.5 4.5 L14 2 V14.5 L1.5 17 Z" fill="#fbfbfd" stroke="#3a3a3c" stroke-width="1" stroke-linejoin="round"/>
<path d="M7.7 0.3 V3 M7.7 5 V8 M7.7 10 V13 M7.7 15.2 V18.7" stroke="#3a3a3c" stroke-width="1.1"/></svg><div class="ti" style="left:49.4px;top:434px;transform:scaleX(0.9714);">Left Hand Plane</div><svg class="a" style="left:25.5px;top:453.0px" width="19" height="18" viewBox="0 0 19 18"><path d="M2 4 L6 2 V14 L2 16 Z" fill="#f4f4f6" stroke="#333" stroke-width="1"/><path d="M6 2 L10 4 V16 L6 14" fill="#dcdcde" stroke="#333" stroke-width="1"/>
<path d="M8 4.5 L12 2.5 L17 4.5 V14.5 L12 17 L8 14.5 Z" fill="#3e93c4" stroke="#1c5f87" stroke-width="1"/><path d="M11 7 H14.5 V13 H11 Z" fill="#a9d3ea" stroke="#1c5f87" stroke-width=".8"/></svg><div class="ti" style="left:49.4px;top:456px;transform:scaleX(0.9157);">Split1</div><svg class="a" style="left:25.5px;top:475.0px" width="19" height="18" viewBox="0 0 19 18"><path d="M2 4 L5 2 H15 L12 4 Z" fill="#fff" stroke="#333" stroke-width="1"/><path d="M2 4 H12 V6 C7 6 6 10 6 16 H2 Z" fill="#f0f0f2" stroke="#333" stroke-width="1"/>
<path d="M6 16 C6 10 8 6.5 13 6.5 C16 6.5 17.5 8.5 17.5 11 V14 H14.5 V11.5 C14.5 10.3 13.8 9.7 12.8 9.7 C10 9.7 9.5 12 9.5 16 Z" fill="#3e93c4" stroke="#1c5f87" stroke-width="1"/></svg><div class="ti" style="left:49.4px;top:478px;transform:scaleX(0.9539);">Cut-Sweep1</div><svg class="a" style="left:25.5px;top:497.0px" width="19" height="18" viewBox="0 0 19 18"><path d="M2 5 L8 2 L15 4.5 V12 L9 16 L2 13 Z" fill="#3e93c4" stroke="#1c5f87" stroke-width="1" stroke-linejoin="round"/><path d="M2 5 L9 8 L15 4.5 M9 8 V16" stroke="#1c5f87" stroke-width="1" fill="none"/><path d="M2 5 L8 2 L15 4.5 L9 8 Z" fill="#7fc0e2" stroke="#1c5f87" stroke-width="1" stroke-linejoin="round"/>
<path d="M12.5 11.5 L17.5 16.5 M17.5 11.5 L12.5 16.5" stroke="#111" stroke-width="1.8"/></svg><div class="ti" style="left:49.4px;top:500px;transform:scaleX(0.9674);">Body-Delete/Keep 1</div><svg class="a" style="left:25.5px;top:519.0px" width="19" height="18" viewBox="0 0 19 18"><path d="M2 6.5 L7 2.5 H13 C16 2.5 17.5 4.5 17.5 7 V12 L12 16.5 H2 Z" fill="#f3f3f5" stroke="#b5b5b7" stroke-width="1" stroke-linejoin="round"/>
<path d="M7 2.5 H13 C16 2.5 17.5 4.5 17.5 7 L12 11 C12 8 10.5 6.5 7.5 6.5 H2 Z" fill="#e6e6e8" stroke="#b5b5b7" stroke-width="1" stroke-linejoin="round"/>
<path d="M12 11 V16.5 L17.5 12 V7 Z" fill="#e9e9eb" stroke="#b5b5b7" stroke-width="1" stroke-linejoin="round"/></svg><div class="ti" style="left:49.4px;top:522px;transform:scaleX(0.9339);color:#a4a4a6;">Fillet1</div><svg class="a" style="left:25.5px;top:541.0px" width="19" height="18" viewBox="0 0 19 18"><path d="M2 4 L5 2 H15 L12 4 Z" fill="#fff" stroke="#333" stroke-width="1"/><path d="M2 4 H12 V6 C7 6 6 10 6 16 H2 Z" fill="#f0f0f2" stroke="#333" stroke-width="1"/>
<path d="M6 16 C6 10 8 6.5 13 6.5 C16 6.5 17.5 8.5 17.5 11 V14 H14.5 V11.5 C14.5 10.3 13.8 9.7 12.8 9.7 C10 9.7 9.5 12 9.5 16 Z" fill="#3e93c4" stroke="#1c5f87" stroke-width="1"/></svg><div class="ti" style="left:49.4px;top:544px;transform:scaleX(0.9736);">Cut-Sweep2</div><svg class="a" style="left:25.5px;top:563.0px" width="19" height="18" viewBox="0 0 19 18"><path d="M2 4 L5 2 H15 L12 4 Z" fill="#fff" stroke="#333" stroke-width="1"/><path d="M2 4 H12 V6 C7 6 6 10 6 16 H2 Z" fill="#f0f0f2" stroke="#333" stroke-width="1"/>
<path d="M6 16 C6 10 8 6.5 13 6.5 C16 6.5 17.5 8.5 17.5 11 V14 H14.5 V11.5 C14.5 10.3 13.8 9.7 12.8 9.7 C10 9.7 9.5 12 9.5 16 Z" fill="#3e93c4" stroke="#1c5f87" stroke-width="1"/></svg><div class="ti" style="left:49.4px;top:566px;transform:scaleX(0.9736);">Cut-Sweep3</div><svg class="a" style="left:25.5px;top:585.0px" width="19" height="18" viewBox="0 0 19 18"><path d="M2 6.5 L7 2.5 H13 C16 2.5 17.5 4.5 17.5 7 V12 L12 16.5 H2 Z" fill="#f4f4f6" stroke="#333" stroke-width="1" stroke-linejoin="round"/>
<path d="M7 2.5 H13 C16 2.5 17.5 4.5 17.5 7 L12 11 C12 8 10.5 6.5 7.5 6.5 H2 Z" fill="#4a9fce" stroke="#333" stroke-width="1" stroke-linejoin="round"/>
<path d="M12 11 V16.5 L17.5 12 V7 Z" fill="#dcdcde" stroke="#333" stroke-width="1" stroke-linejoin="round"/></svg><div class="ti" style="left:49.4px;top:588px;transform:scaleX(0.9745);">Fillet2</div><svg class="a" style="left:25.5px;top:607.0px" width="19" height="18" viewBox="0 0 19 18"><path d="M2 6.5 L7 2.5 H13 C16 2.5 17.5 4.5 17.5 7 V12 L12 16.5 H2 Z" fill="#f4f4f6" stroke="#333" stroke-width="1" stroke-linejoin="round"/>
<path d="M7 2.5 H13 C16 2.5 17.5 4.5 17.5 7 L12 11 C12 8 10.5 6.5 7.5 6.5 H2 Z" fill="#4a9fce" stroke="#333" stroke-width="1" stroke-linejoin="round"/>
<path d="M12 11 V16.5 L17.5 12 V7 Z" fill="#dcdcde" stroke="#333" stroke-width="1" stroke-linejoin="round"/></svg><div class="ti" style="left:49.4px;top:610px;transform:scaleX(0.9745);">Fillet3</div><div class="a" style="left:0;top:627px;width:230px;height:3px;background:#3b8fc0"></div><div class="a" style="left:0;top:805px;width:233px;height:16px;background:#f1f1f3"></div><div class="a" style="left:17px;top:806px;width:158px;height:14px;background:#cdcdcf"></div><svg class="a" style="left:4.5px;top:808.0px" width="8" height="10" viewBox="0 0 8 10"><path d="M6 1.5 L2.5 5 L6 8.5" stroke="#444" stroke-width="1.6" fill="none"/></svg><svg class="a" style="left:219.0px;top:808.0px" width="8" height="10" viewBox="0 0 8 10"><path d="M2 1.5 L5.5 5 L2 8.5" stroke="#444" stroke-width="1.6" fill="none"/></svg></div><div class="a" style="left:240px;top:30px;width:1px;height:826px;background:#8e8e90"></div><div class="a" style="left:240px;top:426px;width:8px;height:36px;background:#f4f4f6;border:1px solid #8e8e90;border-left:none"></div><div class="a" style="left:242px;top:441px;width:5px;height:5px;border-radius:3px;background:#bdbdbf;border:1px solid #9a9a9c"></div><div class="a" style="left:8px;top:857px;width:66px;height:14px;background:#b3b3b5"></div><div class="a" style="left:23px;top:857px;width:1px;height:14px;background:#9c9c9e"></div><svg class="a" style="left:9.0px;top:857.0px" width="14" height="14" viewBox="0 0 14 14"><path d="M9 3 L4 7 L9 11 Z M3 3 V11" fill="#a4a4a6" stroke="#a4a4a6" stroke-width="1"/></svg><div class="a" style="left:39px;top:857px;width:1px;height:14px;background:#9c9c9e"></div><svg class="a" style="left:25.0px;top:857.0px" width="14" height="14" viewBox="0 0 14 14"><path d="M10 3 L5 7 L10 11 Z" fill="#a4a4a6" stroke="#a4a4a6" stroke-width="1"/></svg><div class="a" style="left:55px;top:857px;width:1px;height:14px;background:#9c9c9e"></div><svg class="a" style="left:41.0px;top:857.0px" width="14" height="14" viewBox="0 0 14 14"><path d="M5 3 L10 7 L5 11 Z" fill="#a4a4a6" stroke="#a4a4a6" stroke-width="1"/></svg><div class="a" style="left:71px;top:857px;width:1px;height:14px;background:#9c9c9e"></div><svg class="a" style="left:57.0px;top:857.0px" width="14" height="14" viewBox="0 0 14 14"><path d="M5 3 L10 7 L5 11 Z M11 3 V11" fill="#a4a4a6" stroke="#a4a4a6" stroke-width="1"/></svg><div class="btab" style="left:74px;top:856px;width:57px;background:#fdfdfe;font-weight:bold;color:#111;height:16px;line-height:15px;text-align:left;padding-left:13px"><div style="display:inline-block;transform-origin:0 50%;transform:scaleX(0.9950);">Model</div></div><div class="btab" style="left:131px;top:857px;width:68px;background:#d9d9db;border-right:1px solid #9a9a9c;color:#222;text-align:left;padding-left:10.5px"><div style="display:inline-block;transform-origin:0 50%;transform:scaleX(0.9273);">3D Views</div></div><div class="btab" style="left:199px;top:857px;width:108px;background:#d9d9db;border-right:1px solid #9a9a9c;color:#222;text-align:left;padding-left:10px"><div style="display:inline-block;transform-origin:0 50%;transform:scaleX(0.9994);">Motion Study 1</div></div><div class="a" style="left:0;top:871px;width:960px;height:7px;background:#dbe7f3"></div><div class="a" style="left:934px;top:27px;width:26px;height:167px;background:#dfdfe1;border-left:1px solid #9a9a9c;border-bottom:1px solid #9a9a9c"></div><div class="a" style="left:934px;top:51px;width:26px;height:1px;background:#a9a9ab"></div><div class="a" style="left:934px;top:75px;width:26px;height:1px;background:#a9a9ab"></div><div class="a" style="left:934px;top:99px;width:26px;height:1px;background:#a9a9ab"></div><div class="a" style="left:935px;top:123px;width:25px;height:24px;background:#fafafc"></div><div class="a" style="left:934px;top:123px;width:26px;height:1px;background:#a9a9ab"></div><div class="a" style="left:934px;top:147px;width:26px;height:1px;background:#a9a9ab"></div><div class="a" style="left:934px;top:170px;width:26px;height:1px;background:#a9a9ab"></div><svg class="a" style="left:936.0px;top:30.0px" width="20" height="18" viewBox="0 0 20 18"><path d="M1.5 9 L10 1.5 L18.5 9" fill="none" stroke="#1f5f86" stroke-width="2"/><path d="M4.5 9 V16.5 H15.5 V9" fill="#fff" stroke="#333" stroke-width="1.2"/><path d="M8.5 16.5 V11.5 H11.5 V16.5" fill="none" stroke="#333" stroke-width="1.1"/></svg><svg class="a" style="left:937.0px;top:52.0px" width="18" height="20" viewBox="0 0 18 20"><path d="M1.5 6.5 L4.5 5 L7 6.5 V16.5 L4.5 18.5 L1.5 16.5 Z M7 5.5 L9.8 4 L12.3 5.5 V15.5 L9.8 17.5 L7 16 Z M12.3 4.5 L14.8 3 L16.5 4.5 V13.5 L14.5 15.5 L12.3 14.5 Z" fill="#f4f4f6" stroke="#333" stroke-width="1" stroke-linejoin="round"/><path d="M4.5 7.8 V18.5 M9.8 6.8 V17.5 M14.6 5.8 V15.5" stroke="#333" stroke-width=".9"/></svg><svg class="a" style="left:936.0px;top:78.0px" width="20" height="16" viewBox="0 0 20 16"><path d="M1.5 14.5 V2.5 H7 L8.5 4.5 H15" fill="#f4f4f6" stroke="#444" stroke-width="1.1"/><path d="M1.5 14.5 L5.5 6.5 H19 L15 14.5 Z" fill="#fdfdfd" stroke="#444" stroke-width="1.1"/></svg><svg class="a" style="left:937.0px;top:102.0px" width="18" height="16" viewBox="0 0 18 16"><rect x="1" y="1" width="16" height="14" fill="#fdfdfd" stroke="#6b5206" stroke-width="1.2"/><rect x="3" y="3" width="7" height="3" fill="#f2c31b" stroke="#6b5206" stroke-width=".7"/><rect x="12" y="3" width="3" height="3" fill="#f2c31b" stroke="#6b5206" stroke-width=".7"/><path d="M6 8 H8.5 V10.5 H11 V13 H3.5 V10.5 H6 Z" fill="#f2c31b" stroke="#6b5206" stroke-width=".7"/><rect x="12.5" y="8.5" width="2.5" height="5" fill="#bbb" stroke="#6b5206" stroke-width=".6"/></svg><svg class="a" style="left:936.0px;top:125.0px" width="20" height="20" viewBox="0 0 20 20"><circle cx="10" cy="10" r="8.2" fill="#f2f2f2" stroke="#777" stroke-width=".6"/><path d="M10 10 L10 1.8 A8.2 8.2 0 0 0 2 8 Z" fill="#3d7fd9"/><path d="M10 10 L2 8 A8.2 8.2 0 0 0 7 17.6 Z" fill="#41b649"/><path d="M10 10 L7 17.6 A8.2 8.2 0 0 0 17.8 12.5 Z" fill="#f3c21c"/><path d="M10 10 L17.8 12.5 A8.2 8.2 0 0 0 10 1.8 Z" fill="#e03a2a"/><ellipse cx="8" cy="6" rx="3.5" ry="2.2" fill="#fff" opacity=".45"/></svg><svg class="a" style="left:937.0px;top:150.0px" width="18" height="18" viewBox="0 0 18 18"><rect x="1" y="1" width="16" height="16" fill="#fdfdfd" stroke="#1c5f87" stroke-width="1.2"/><rect x="1" y="1" width="16" height="3" fill="#3e93c4"/><rect x="3" y="6.3" width="3.6" height="2.4" fill="#3e93c4"/><rect x="3" y="10" width="3.6" height="2.4" fill="#3e93c4"/><rect x="3" y="13.6" width="3.6" height="2.1" fill="#3e93c4"/><path d="M8.3 7.5 H15 M8.3 11.2 H15 M8.3 14.7 H15" stroke="#333" stroke-width="1.1"/></svg><svg class="a" style="left:936.0px;top:173.0px" width="20" height="18" viewBox="0 0 20 18"><rect x="1" y="1" width="15" height="11" fill="#fdfdfd" stroke="#333" stroke-width="1.1"/><path d="M3 3.5 H14 M3 6 H10" stroke="#1c5f87" stroke-width="1.2"/><path d="M5 15 H11 M8 12 V15" stroke="#333" stroke-width="1.1"/><path d="M8 11 L11 8 L13 9 L14.5 8 L18.5 10 V14 L13 17 L8 14 Z" fill="#f2c31b" stroke="#6b5206" stroke-width=".9" stroke-linejoin="round"/><rect x="14" y="9" width="3" height="3" fill="#3e93c4" stroke="#1c5f87" stroke-width=".6"/></svg></div>
<div id="status" class="a">
<div class="t" style="left:1px;top:3px;transform:scaleX(0.8813);">SOLIDWORKS</div>
<div class="t" style="left:1635px;top:3px;transform:scaleX(0.9799);">Editing Part</div>
<div class="t" style="left:1814px;top:3px;transform:scaleX(0.9560);">MMGS</div>
<div class="a" style="left:1868px;top:7px;width:0;height:0;border-bottom:4px solid #333;border-left:3.5px solid transparent;border-right:3.5px solid transparent"></div>
<svg class="a" style="left:1899.0px;top:2.0px" width="18" height="14" viewBox="0 0 18 14"><path d="M2 5 L10 1.5 L16 6 L8 10.5 Z" fill="#f2f2f2" stroke="#333" stroke-width="1.1"/><path d="M2 5 V8 L8 13 V10.5 M8 13 L16 8.5 V6" fill="none" stroke="#333" stroke-width="1.1"/><circle cx="8" cy="5.5" r="1.7" fill="none" stroke="#333"/></svg>
</div>
</body></html>
